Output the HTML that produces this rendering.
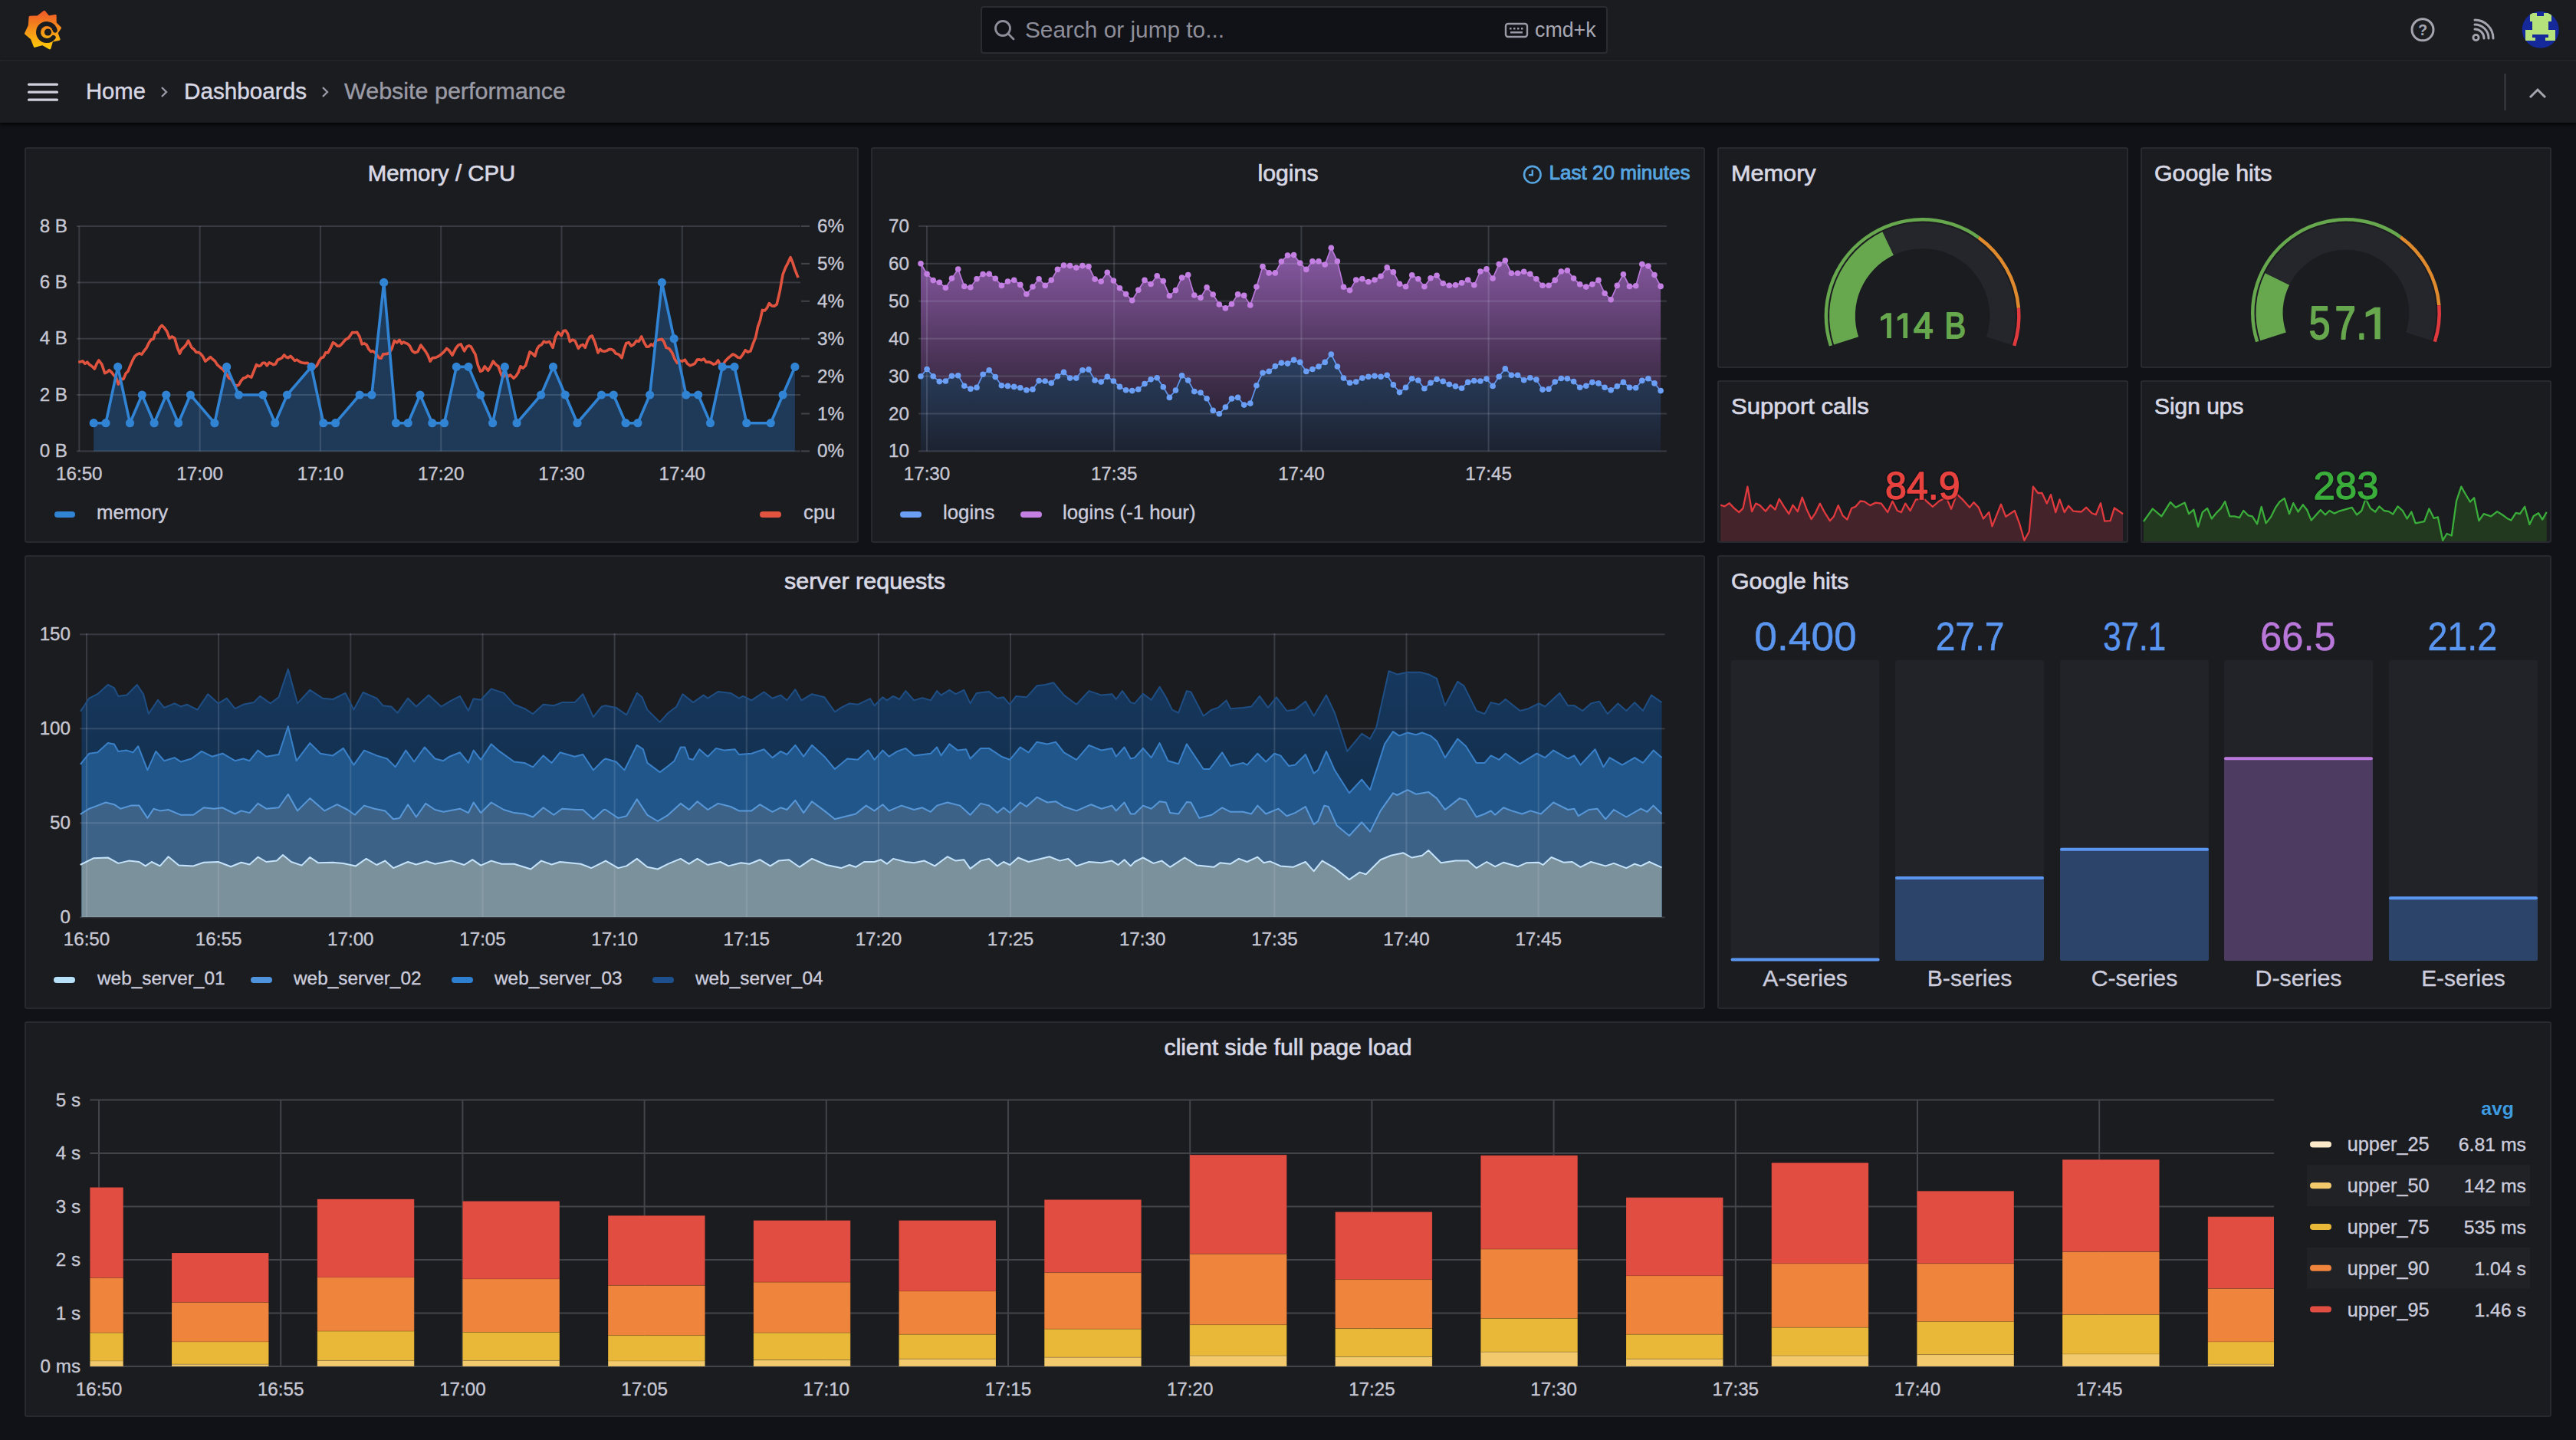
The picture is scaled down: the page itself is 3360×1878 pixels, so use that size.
<!DOCTYPE html><html><head><meta charset="utf-8"><title>Website performance</title><style>
html,body{margin:0;padding:0;background:#111217;}
body{width:3360px;height:1878px;position:relative;overflow:hidden;font-family:"Liberation Sans",sans-serif;color:#ccccdc;}
.a{position:absolute;}
.panel{position:absolute;background:#1a1c20;border:2px solid #27292e;border-radius:3px;box-sizing:border-box;}
svg{position:absolute;left:0;top:0;}
text{font-family:"Liberation Sans",sans-serif;}
</style></head><body>
<div class="a" style="left:0;top:0;width:3360px;height:78px;background:#1a1c20;border-bottom:2px solid #26282c;"></div>
<div class="a" style="left:0;top:80px;width:3360px;height:80px;background:#1a1c20;box-shadow:0 2px 5px rgba(0,0,0,0.95);"></div>
<div class="a" style="left:1279px;top:8px;width:818px;height:62px;background:#111217;border:2px solid #2a2c31;border-radius:4px;box-sizing:border-box;"></div>
<div class="panel" style="left:32px;top:192px;width:1088px;height:516px;"></div>
<div class="panel" style="left:1136px;top:192px;width:1088px;height:516px;"></div>
<div class="panel" style="left:2240px;top:192px;width:536px;height:288px;"></div>
<div class="panel" style="left:2792px;top:192px;width:536px;height:288px;"></div>
<div class="panel" style="left:2240px;top:496px;width:536px;height:212px;"></div>
<div class="panel" style="left:2792px;top:496px;width:536px;height:212px;"></div>
<div class="panel" style="left:32px;top:724px;width:2192px;height:592px;"></div>
<div class="panel" style="left:2240px;top:724px;width:1088px;height:592px;"></div>
<div class="panel" style="left:32px;top:1332px;width:3296px;height:516px;"></div>
<svg width="3360" height="1878" viewBox="0 0 3360 1878"><defs><linearGradient id="lg" x1="0" y1="0" x2="0" y2="1"><stop offset="0" stop-color="#f05a28"/><stop offset="1" stop-color="#fbca0a"/></linearGradient></defs><path d="M57.8,15.3 L63.2,22.0 L72.2,20.4 L72.2,30.1 L78.5,36.4 L74.1,43.0 L77.1,51.2 L67.8,53.2 L64.9,62.9 L55.3,57.5 L45.3,60.4 L41.4,50.4 L33.5,43.6 L38.3,33.5 L39.1,22.2 L49.5,21.7Z" fill="url(#lg)" stroke="url(#lg)" stroke-width="3" stroke-linejoin="round"/><path d="M71.8,39.7 A11 11 0 1 0 69.7,48.8" fill="none" stroke="#1a1c20" stroke-width="6" stroke-linecap="round"/><circle cx="62.5" cy="42" r="4.6" fill="#1a1c20"/><rect x="36" y="108.5" width="40" height="3.2" rx="1.5" fill="#d0d0dc"/><rect x="36" y="118.5" width="40" height="3.2" rx="1.5" fill="#d0d0dc"/><rect x="36" y="128.5" width="40" height="3.2" rx="1.5" fill="#d0d0dc"/><text x="112" y="129.4" font-size="29.5" fill="#d8d8e4" text-anchor="start" font-weight="normal"  textLength="78" lengthAdjust="spacingAndGlyphs" stroke="#d8d8e4" stroke-width="0.4" stroke-linejoin="round">Home</text><path d="M211,114 L217,120 L211,126" fill="none" stroke="#9a9aa6" stroke-width="2.4"/><text x="240" y="129.4" font-size="29.5" fill="#d8d8e4" text-anchor="start" font-weight="normal"  textLength="160" lengthAdjust="spacingAndGlyphs" stroke="#d8d8e4" stroke-width="0.4" stroke-linejoin="round">Dashboards</text><path d="M421,114 L427,120 L421,126" fill="none" stroke="#9a9aa6" stroke-width="2.4"/><text x="449" y="129.4" font-size="30.3" fill="#9b9ba6" text-anchor="start" font-weight="normal"  textLength="289" lengthAdjust="spacingAndGlyphs" stroke="#9b9ba6" stroke-width="0.4" stroke-linejoin="round">Website performance</text><circle cx="1308" cy="37" r="9.5" fill="none" stroke="#8e8e9a" stroke-width="2.8"/><path d="M1315,44 L1322,51" stroke="#8e8e9a" stroke-width="2.8" stroke-linecap="round"/><text x="1337" y="49" font-size="29.8" fill="#8e8e9a" text-anchor="start" font-weight="normal" >Search or jump to...</text><rect x="1964" y="31" width="28" height="17" rx="3" fill="none" stroke="#9a9aa6" stroke-width="2.4"/><rect x="1969" y="36" width="2.5" height="2.5" fill="#9a9aa6"/><rect x="1974" y="36" width="2.5" height="2.5" fill="#9a9aa6"/><rect x="1979" y="36" width="2.5" height="2.5" fill="#9a9aa6"/><rect x="1984" y="36" width="2.5" height="2.5" fill="#9a9aa6"/><rect x="1970" y="41" width="16" height="2.5" fill="#9a9aa6"/><text x="2002" y="48" font-size="26.8" fill="#a8a8b4" text-anchor="start" font-weight="normal" >cmd+k</text><circle cx="3160" cy="38.8" r="14" fill="none" stroke="#a5a5b0" stroke-width="3"/><text x="3160" y="46" font-size="20" fill="#a5a5b0" text-anchor="middle" font-weight="bold" >?</text><circle cx="3229.5" cy="49" r="3.6" fill="none" stroke="#a5a5b0" stroke-width="2.8"/><path d="M3228,38 A12 12 0 0 1 3240,50" fill="none" stroke="#a5a5b0" stroke-width="3" stroke-linecap="round"/><path d="M3228,32 A18 18 0 0 1 3246,50" fill="none" stroke="#a5a5b0" stroke-width="3" stroke-linecap="round"/><path d="M3228,26 A24 24 0 0 1 3252,50" fill="none" stroke="#a5a5b0" stroke-width="3" stroke-linecap="round"/><clipPath id="avc"><circle cx="3313.7" cy="38.8" r="24"/></clipPath><g clip-path="url(#avc)"><rect x="3289" y="14" width="50" height="50" fill="#15299a"/><path d="M3300,17 H3309 V21 H3318 V17 H3328 V28 H3324 V39 H3333 V53 H3320 V49 H3324 V45 H3303 V49 H3307 V53 H3294 V39 H3303 V28 H3300 Z" fill="#b6e27c"/></g><rect x="3266.5" y="96" width="2" height="48" fill="#3a3c42"/><path d="M3300,127 L3310,117 L3320,127" fill="none" stroke="#a5a5b0" stroke-width="3"/><text x="576" y="235.8" font-size="29.2" fill="#d8d8e4" text-anchor="middle" font-weight="normal"  textLength="192.5" lengthAdjust="spacingAndGlyphs" stroke="#d8d8e4" stroke-width="0.7" stroke-linejoin="round">Memory / CPU</text><text x="1680" y="235.8" font-size="29.8" fill="#d8d8e4" text-anchor="middle" font-weight="normal"  textLength="79" lengthAdjust="spacingAndGlyphs" stroke="#d8d8e4" stroke-width="0.7" stroke-linejoin="round">logins</text><text x="2258" y="235.8" font-size="30.2" fill="#d8d8e4" text-anchor="start" font-weight="normal"  textLength="110.7" lengthAdjust="spacingAndGlyphs" stroke="#d8d8e4" stroke-width="0.7" stroke-linejoin="round">Memory</text><text x="2810" y="235.8" font-size="30" fill="#d8d8e4" text-anchor="start" font-weight="normal"  textLength="153.4" lengthAdjust="spacingAndGlyphs" stroke="#d8d8e4" stroke-width="0.7" stroke-linejoin="round">Google hits</text><text x="2258" y="539.5" font-size="30.4" fill="#d8d8e4" text-anchor="start" font-weight="normal"  textLength="179.7" lengthAdjust="spacingAndGlyphs" stroke="#d8d8e4" stroke-width="0.7" stroke-linejoin="round">Support calls</text><text x="2810" y="539.5" font-size="29.8" fill="#d8d8e4" text-anchor="start" font-weight="normal"  textLength="116.4" lengthAdjust="spacingAndGlyphs" stroke="#d8d8e4" stroke-width="0.7" stroke-linejoin="round">Sign ups</text><text x="1128" y="767.8" font-size="30.2" fill="#d8d8e4" text-anchor="middle" font-weight="normal"  textLength="210" lengthAdjust="spacingAndGlyphs" stroke="#d8d8e4" stroke-width="0.7" stroke-linejoin="round">server requests</text><text x="2258" y="767.8" font-size="30" fill="#d8d8e4" text-anchor="start" font-weight="normal"  textLength="153.4" lengthAdjust="spacingAndGlyphs" stroke="#d8d8e4" stroke-width="0.7" stroke-linejoin="round">Google hits</text><text x="1680" y="1375.8" font-size="30" fill="#d8d8e4" text-anchor="middle" font-weight="normal"  textLength="323" lengthAdjust="spacingAndGlyphs" stroke="#d8d8e4" stroke-width="0.7" stroke-linejoin="round">client side full page load</text><circle cx="1998.8" cy="227.7" r="10.8" fill="none" stroke="#57a5e0" stroke-width="2.6"/><path d="M1998.8,221.5 V228.2 H1994" fill="none" stroke="#57a5e0" stroke-width="2.4"/><text x="2020.5" y="233.8" font-size="26" fill="#57a5e0" text-anchor="start" font-weight="normal"  textLength="184" lengthAdjust="spacingAndGlyphs" stroke="#57a5e0" stroke-width="0.9" stroke-linejoin="round">Last 20 minutes</text><clipPath id="c_mem"><rect x="100" y="285" width="944" height="303.4"/></clipPath><path d="M122.2,551.7 L138,551.7 L153.7,478.4 L169.5,551.7 L185.3,515 L201.1,551.7 L216.8,515 L232.6,551.7 L248.4,515 L279.9,551.7 L295.7,478.4 L311.4,515 L343,515 L358.8,551.7 L374.5,515 L406.1,478.4 L421.8,551.7 L437.6,551.7 L469.1,515 L484.9,515 L500.7,368.4 L516.5,551.7 L532.2,551.7 L548,515 L563.8,551.7 L579.5,551.7 L595.3,478.4 L611.1,478.4 L626.8,515 L642.6,551.7 L658.4,478.4 L674.1,551.7 L705.7,515 L721.5,478.4 L737.2,515 L753,551.7 L784.5,515 L800.3,515 L816.1,551.7 L831.9,551.7 L847.6,515 L863.4,368.4 L879.2,441.7 L894.9,515 L910.7,515 L926.5,551.7 L942.2,478.4 L958,478.4 L973.8,551.7 L1005.3,551.7 L1021.1,515 L1036.9,478.4 L1036.9,588.4 L122.2,588.4 Z" fill="#1f3a58"/><rect x="100" y="587.4" width="944" height="2" fill="rgba(210,215,235,0.16)"/><text x="88" y="595.9" font-size="24.2" fill="#c8c8d4" text-anchor="end" font-weight="normal"  stroke="#c8c8d4" stroke-width="0.35" stroke-linejoin="round">0 B</text><rect x="100" y="514" width="944" height="2" fill="rgba(210,215,235,0.16)"/><text x="88" y="522.5" font-size="24.2" fill="#c8c8d4" text-anchor="end" font-weight="normal"  stroke="#c8c8d4" stroke-width="0.35" stroke-linejoin="round">2 B</text><rect x="100" y="440.7" width="944" height="2" fill="rgba(210,215,235,0.16)"/><text x="88" y="449.2" font-size="24.2" fill="#c8c8d4" text-anchor="end" font-weight="normal"  stroke="#c8c8d4" stroke-width="0.35" stroke-linejoin="round">4 B</text><rect x="100" y="367.4" width="944" height="2" fill="rgba(210,215,235,0.16)"/><text x="88" y="375.9" font-size="24.2" fill="#c8c8d4" text-anchor="end" font-weight="normal"  stroke="#c8c8d4" stroke-width="0.35" stroke-linejoin="round">6 B</text><rect x="100" y="294" width="944" height="2" fill="rgba(210,215,235,0.16)"/><text x="88" y="302.5" font-size="24.2" fill="#c8c8d4" text-anchor="end" font-weight="normal"  stroke="#c8c8d4" stroke-width="0.35" stroke-linejoin="round">8 B</text><rect x="102.3" y="295" width="2" height="293.4" fill="rgba(210,215,235,0.16)"/><text x="103.3" y="626" font-size="24.2" fill="#c8c8d4" text-anchor="middle" font-weight="normal"  stroke="#c8c8d4" stroke-width="0.35" stroke-linejoin="round">16:50</text><rect x="259.6" y="295" width="2" height="293.4" fill="rgba(210,215,235,0.16)"/><text x="260.6" y="626" font-size="24.2" fill="#c8c8d4" text-anchor="middle" font-weight="normal"  stroke="#c8c8d4" stroke-width="0.35" stroke-linejoin="round">17:00</text><rect x="416.9" y="295" width="2" height="293.4" fill="rgba(210,215,235,0.16)"/><text x="417.9" y="626" font-size="24.2" fill="#c8c8d4" text-anchor="middle" font-weight="normal"  stroke="#c8c8d4" stroke-width="0.35" stroke-linejoin="round">17:10</text><rect x="574.2" y="295" width="2" height="293.4" fill="rgba(210,215,235,0.16)"/><text x="575.2" y="626" font-size="24.2" fill="#c8c8d4" text-anchor="middle" font-weight="normal"  stroke="#c8c8d4" stroke-width="0.35" stroke-linejoin="round">17:20</text><rect x="731.5" y="295" width="2" height="293.4" fill="rgba(210,215,235,0.16)"/><text x="732.5" y="626" font-size="24.2" fill="#c8c8d4" text-anchor="middle" font-weight="normal"  stroke="#c8c8d4" stroke-width="0.35" stroke-linejoin="round">17:30</text><rect x="888.8" y="295" width="2" height="293.4" fill="rgba(210,215,235,0.16)"/><text x="889.8" y="626" font-size="24.2" fill="#c8c8d4" text-anchor="middle" font-weight="normal"  stroke="#c8c8d4" stroke-width="0.35" stroke-linejoin="round">17:40</text><rect x="1045" y="587.4" width="11" height="2" fill="#424449"/><text x="1066" y="596.4" font-size="24.2" fill="#c8c8d4" text-anchor="start" font-weight="normal"  stroke="#c8c8d4" stroke-width="0.35" stroke-linejoin="round">0%</text><rect x="1045" y="538.5" width="11" height="2" fill="#424449"/><text x="1066" y="547.5" font-size="24.2" fill="#c8c8d4" text-anchor="start" font-weight="normal"  stroke="#c8c8d4" stroke-width="0.35" stroke-linejoin="round">1%</text><rect x="1045" y="489.6" width="11" height="2" fill="#424449"/><text x="1066" y="498.6" font-size="24.2" fill="#c8c8d4" text-anchor="start" font-weight="normal"  stroke="#c8c8d4" stroke-width="0.35" stroke-linejoin="round">2%</text><rect x="1045" y="440.7" width="11" height="2" fill="#424449"/><text x="1066" y="449.7" font-size="24.2" fill="#c8c8d4" text-anchor="start" font-weight="normal"  stroke="#c8c8d4" stroke-width="0.35" stroke-linejoin="round">3%</text><rect x="1045" y="391.8" width="11" height="2" fill="#424449"/><text x="1066" y="400.8" font-size="24.2" fill="#c8c8d4" text-anchor="start" font-weight="normal"  stroke="#c8c8d4" stroke-width="0.35" stroke-linejoin="round">4%</text><rect x="1045" y="342.9" width="11" height="2" fill="#424449"/><text x="1066" y="351.9" font-size="24.2" fill="#c8c8d4" text-anchor="start" font-weight="normal"  stroke="#c8c8d4" stroke-width="0.35" stroke-linejoin="round">5%</text><rect x="1045" y="294" width="11" height="2" fill="#424449"/><text x="1066" y="303" font-size="24.2" fill="#c8c8d4" text-anchor="start" font-weight="normal"  stroke="#c8c8d4" stroke-width="0.35" stroke-linejoin="round">6%</text><path d="M102.2,472.2 L105.1,471.8 L108,471 L110.9,474.4 L113.8,472.2 L116.7,475.6 L120,477.8 L123.3,481.1 L126.1,474.5 L128.9,470 L132.8,475.2 L136.7,486.7 L139.6,485.4 L142.6,482.7 L145.6,485.6 L148.5,489.3 L151.5,492.8 L154.4,501.1 L157.8,494.2 L161.1,494.4 L164.1,487 L167,484.2 L170,476.7 L173,469.9 L175.9,464.7 L178.9,462.2 L181.9,460.9 L184.8,462.2 L187.8,457.8 L191.1,453.6 L194.4,446.7 L197.2,442.7 L200,442.2 L202.8,433.5 L205.6,433.5 L208.3,427.3 L211.1,424.4 L214.4,427.5 L217.8,432.4 L221.1,441.1 L224.4,438.9 L227.8,441.1 L231.1,452.5 L234.4,461.1 L237.2,455.3 L240,452.8 L242.8,449.5 L245.6,444.4 L250,453.3 L253,455.7 L255.9,459.4 L258.9,459.5 L261.9,461.5 L264.8,465.2 L267.8,471.1 L271.1,468.6 L274.4,465.6 L277.4,468.5 L280.4,470.9 L283.3,475.6 L287.2,479 L291.1,482.2 L295,487.5 L298.9,493.3 L302.2,495.3 L305.6,501.5 L308.9,503.3 L311.7,501.7 L314.4,496.7 L317.4,493.3 L320.4,492.4 L323.3,490 L327.8,492.2 L331.1,484.1 L334.4,475.6 L337.2,477.5 L340,476.7 L342.8,473.2 L345.6,473.3 L348.3,476.8 L351.1,472.9 L353.9,474 L356.7,475.6 L359.4,474.7 L362.2,469.3 L365,468.3 L367.8,466.7 L370.6,463 L373.3,465.7 L376.1,466.7 L378.9,464.4 L381.7,467.1 L384.4,470.5 L387.2,469.1 L390,471.1 L392.8,472.8 L395.6,473.2 L398.3,473.6 L401.1,473.3 L404.4,476.6 L407.8,480 L410.6,478.8 L413.3,476.8 L416.1,470.9 L418.9,466.7 L421.9,465.8 L424.8,459.8 L427.8,460 L431.1,453.9 L434.4,446.7 L437.2,448.3 L440,451.3 L442.8,451.4 L445.6,448.9 L448.3,445.7 L451.1,442.5 L453.9,441.4 L456.7,437.8 L459.6,433.5 L462.6,433.7 L465.6,433.3 L468.9,438.7 L472.2,448.9 L475.2,447.9 L478.1,449.6 L481.1,455.6 L483.8,458.4 L486.4,457.8 L489.1,459.9 L491.8,463.1 L494.4,466.7 L497.1,467.3 L499.8,461.9 L502.4,461.7 L505.1,461.4 L507.8,460 L511.1,454.7 L514.4,444.4 L517.8,446.7 L521.1,443.3 L523.8,448.1 L526.4,446 L529.1,447.3 L531.8,448.4 L534.4,451.1 L537.8,457.7 L541.1,460 L545,458.6 L548.9,450 L551.9,454.1 L555,458.1 L558.1,463.4 L561.1,471.1 L564.1,466.8 L567,466.6 L570,465.6 L573.3,463.7 L576.7,461.1 L579.6,458.2 L582.6,454.5 L585.6,456.7 L590,463.3 L594.4,454.4 L597.8,450.1 L601.1,448.9 L605.6,457.8 L608.9,452.2 L611.7,450.9 L614.4,452.2 L617.2,457.3 L620,462.2 L623.3,476.2 L626.7,484.4 L629.4,483.2 L632.2,477.8 L636.7,483.3 L640,477.9 L643.3,471.1 L646.7,475.4 L650,477.8 L654.4,490 L657.2,491.1 L660,487 L662.8,491 L665.6,488.9 L670,493.3 L673,490.5 L675.9,486.1 L678.9,477.8 L682.2,480.1 L685.6,476.7 L688.3,467.9 L691.1,458.9 L694.4,461.1 L697.8,464.4 L700.6,455.1 L703.3,451.1 L706.3,449.7 L709.3,445.4 L712.2,446.7 L716.7,445.6 L721.1,453.3 L724.4,439.7 L727.8,433.3 L732.2,437.8 L735,431.5 L737.8,431.1 L740.6,435.3 L743.3,445.6 L746.7,443.1 L750,444.4 L754.4,454.4 L757.4,450.6 L760.4,449.5 L763.3,453.3 L766.3,444.6 L769.3,439.4 L772.2,437.8 L776.1,446.9 L780,460 L782.8,455.3 L785.6,457.8 L788.5,458.3 L791.5,457.4 L794.4,455.6 L797.4,455.5 L800.4,457.1 L803.3,461.1 L807.2,462.3 L811.1,466.7 L813.9,455.9 L816.7,447.8 L820,446.6 L823.3,451.1 L826.7,449.2 L830,444.4 L833.3,445.2 L836.7,438.9 L840,446.4 L843.3,452.2 L846.3,452 L849.3,448.9 L852.2,451.1 L855.6,443.9 L858.9,443.3 L863.3,442.2 L866.1,445.8 L868.9,453.3 L872.8,454.6 L876.7,460 L880,468.1 L883.3,473.3 L886.7,470.5 L890,471.1 L893.3,469.2 L896.7,474.4 L900,476.8 L903.3,475.6 L906.3,474.1 L909.3,469.1 L912.2,468.9 L915.2,469.7 L918.1,468 L921.1,472.2 L924.4,472 L927.8,473.3 L930.7,475.1 L933.7,474.3 L936.7,470 L939.4,475.5 L942.2,476.7 L946.1,470.8 L950,466.7 L953,464.4 L955.9,462 L958.9,463.3 L962.2,466 L965.6,466.7 L968.9,462.2 L972.2,456.7 L975.6,459.2 L978.9,457.8 L982.2,448.4 L985.6,440 L988.5,426.2 L991.5,417.7 L994.4,404.4 L997.4,405 L1000.4,401.8 L1003.3,395.6 L1006.7,398.9 L1010,399.2 L1013.3,396.7 L1017.2,379.6 L1021.1,357.8 L1024.4,349.3 L1027.8,342.8 L1031.1,335.6 L1033.9,342.4 L1036.7,351.1 L1041.1,362.2" fill="none" stroke="#e0533f" stroke-width="3.6" stroke-linejoin="round"/><path d="M122.2,551.7 L138,551.7 L153.7,478.4 L169.5,551.7 L185.3,515 L201.1,551.7 L216.8,515 L232.6,551.7 L248.4,515 L279.9,551.7 L295.7,478.4 L311.4,515 L343,515 L358.8,551.7 L374.5,515 L406.1,478.4 L421.8,551.7 L437.6,551.7 L469.1,515 L484.9,515 L500.7,368.4 L516.5,551.7 L532.2,551.7 L548,515 L563.8,551.7 L579.5,551.7 L595.3,478.4 L611.1,478.4 L626.8,515 L642.6,551.7 L658.4,478.4 L674.1,551.7 L705.7,515 L721.5,478.4 L737.2,515 L753,551.7 L784.5,515 L800.3,515 L816.1,551.7 L831.9,551.7 L847.6,515 L863.4,368.4 L879.2,441.7 L894.9,515 L910.7,515 L926.5,551.7 L942.2,478.4 L958,478.4 L973.8,551.7 L1005.3,551.7 L1021.1,515 L1036.9,478.4" fill="none" stroke="#3183d4" stroke-width="3.6" stroke-linejoin="round"/><circle cx="122.2" cy="551.7" r="5.6" fill="#3183d4"/><circle cx="138" cy="551.7" r="5.6" fill="#3183d4"/><circle cx="153.7" cy="478.4" r="5.6" fill="#3183d4"/><circle cx="169.5" cy="551.7" r="5.6" fill="#3183d4"/><circle cx="185.3" cy="515" r="5.6" fill="#3183d4"/><circle cx="201.1" cy="551.7" r="5.6" fill="#3183d4"/><circle cx="216.8" cy="515" r="5.6" fill="#3183d4"/><circle cx="232.6" cy="551.7" r="5.6" fill="#3183d4"/><circle cx="248.4" cy="515" r="5.6" fill="#3183d4"/><circle cx="279.9" cy="551.7" r="5.6" fill="#3183d4"/><circle cx="295.7" cy="478.4" r="5.6" fill="#3183d4"/><circle cx="311.4" cy="515" r="5.6" fill="#3183d4"/><circle cx="343" cy="515" r="5.6" fill="#3183d4"/><circle cx="358.8" cy="551.7" r="5.6" fill="#3183d4"/><circle cx="374.5" cy="515" r="5.6" fill="#3183d4"/><circle cx="406.1" cy="478.4" r="5.6" fill="#3183d4"/><circle cx="421.8" cy="551.7" r="5.6" fill="#3183d4"/><circle cx="437.6" cy="551.7" r="5.6" fill="#3183d4"/><circle cx="469.1" cy="515" r="5.6" fill="#3183d4"/><circle cx="484.9" cy="515" r="5.6" fill="#3183d4"/><circle cx="500.7" cy="368.4" r="5.6" fill="#3183d4"/><circle cx="516.5" cy="551.7" r="5.6" fill="#3183d4"/><circle cx="532.2" cy="551.7" r="5.6" fill="#3183d4"/><circle cx="548" cy="515" r="5.6" fill="#3183d4"/><circle cx="563.8" cy="551.7" r="5.6" fill="#3183d4"/><circle cx="579.5" cy="551.7" r="5.6" fill="#3183d4"/><circle cx="595.3" cy="478.4" r="5.6" fill="#3183d4"/><circle cx="611.1" cy="478.4" r="5.6" fill="#3183d4"/><circle cx="626.8" cy="515" r="5.6" fill="#3183d4"/><circle cx="642.6" cy="551.7" r="5.6" fill="#3183d4"/><circle cx="658.4" cy="478.4" r="5.6" fill="#3183d4"/><circle cx="674.1" cy="551.7" r="5.6" fill="#3183d4"/><circle cx="705.7" cy="515" r="5.6" fill="#3183d4"/><circle cx="721.5" cy="478.4" r="5.6" fill="#3183d4"/><circle cx="737.2" cy="515" r="5.6" fill="#3183d4"/><circle cx="753" cy="551.7" r="5.6" fill="#3183d4"/><circle cx="784.5" cy="515" r="5.6" fill="#3183d4"/><circle cx="800.3" cy="515" r="5.6" fill="#3183d4"/><circle cx="816.1" cy="551.7" r="5.6" fill="#3183d4"/><circle cx="831.9" cy="551.7" r="5.6" fill="#3183d4"/><circle cx="847.6" cy="515" r="5.6" fill="#3183d4"/><circle cx="863.4" cy="368.4" r="5.6" fill="#3183d4"/><circle cx="879.2" cy="441.7" r="5.6" fill="#3183d4"/><circle cx="894.9" cy="515" r="5.6" fill="#3183d4"/><circle cx="910.7" cy="515" r="5.6" fill="#3183d4"/><circle cx="926.5" cy="551.7" r="5.6" fill="#3183d4"/><circle cx="942.2" cy="478.4" r="5.6" fill="#3183d4"/><circle cx="958" cy="478.4" r="5.6" fill="#3183d4"/><circle cx="973.8" cy="551.7" r="5.6" fill="#3183d4"/><circle cx="1005.3" cy="551.7" r="5.6" fill="#3183d4"/><circle cx="1021.1" cy="515" r="5.6" fill="#3183d4"/><circle cx="1036.9" cy="478.4" r="5.6" fill="#3183d4"/><rect x="71" y="667" width="27" height="8" rx="4" fill="#3183d4"/><text x="126" y="677" font-size="25.8" fill="#ccccdc" text-anchor="start" font-weight="normal"  stroke="#ccccdc" stroke-width="0.35" stroke-linejoin="round">memory</text><rect x="991" y="667" width="28" height="8" rx="4" fill="#e0533f"/><text x="1048" y="677" font-size="25.8" fill="#ccccdc" text-anchor="start" font-weight="normal"  stroke="#ccccdc" stroke-width="0.35" stroke-linejoin="round">cpu</text><defs><linearGradient id="gp" x1="0" y1="0" x2="0" y2="1"><stop offset="0" stop-color="#8a5aa6"/><stop offset="0.55" stop-color="#4a3356"/><stop offset="1" stop-color="#1c1b22"/></linearGradient><linearGradient id="gb" x1="0" y1="0" x2="0" y2="1"><stop offset="0" stop-color="#2e4a72"/><stop offset="1" stop-color="#1b2130"/></linearGradient></defs><path d="M1201,343.7 L1209.1,357.3 L1217.2,365.6 L1225.3,368.3 L1233.4,375.3 L1241.5,363.1 L1249.7,351 L1257.8,373.4 L1265.9,374.7 L1274,363.7 L1282.1,357.6 L1290.2,357.3 L1298.3,363.3 L1306.4,372.4 L1314.5,367 L1322.7,365.2 L1330.8,371.4 L1338.9,383.5 L1347,374 L1355.1,363.7 L1363.2,372.4 L1371.3,365.2 L1379.4,351.4 L1387.5,346 L1395.6,346.6 L1403.8,349.1 L1411.9,346.6 L1420,347.6 L1428.1,364.1 L1436.2,367 L1444.3,355.3 L1452.4,366 L1460.5,375.7 L1468.6,383.5 L1476.7,391.8 L1484.8,378.2 L1493,365.4 L1501.1,370.5 L1509.2,359.8 L1517.3,366.6 L1525.4,385.8 L1533.5,378.6 L1541.6,362.1 L1549.7,358.6 L1557.8,385 L1566,388.3 L1574.1,374.7 L1582.2,384 L1590.3,397 L1598.4,401.9 L1606.5,396.5 L1614.6,383.9 L1622.7,385.4 L1630.8,398 L1638.9,374.1 L1647,347.6 L1655.2,355.9 L1663.3,355.9 L1671.4,341.1 L1679.5,333 L1687.6,332.6 L1695.7,343.1 L1703.8,351.4 L1711.9,340.8 L1720,340.8 L1728.2,345 L1736.3,323.3 L1744.4,340.8 L1752.5,374.3 L1760.6,378.6 L1768.7,365 L1776.8,363.7 L1784.9,367.5 L1793,365 L1801.1,360.2 L1809.2,348.9 L1817.4,354.9 L1825.5,370.3 L1833.6,373.8 L1841.7,358.8 L1849.8,363.7 L1857.9,373.8 L1866,362.7 L1874.1,359.2 L1882.2,369.5 L1890.3,372.2 L1898.5,371.8 L1906.6,368.9 L1914.7,365 L1922.8,371.8 L1930.9,354 L1939,350.9 L1947.1,363.1 L1955.2,344.6 L1963.3,339.8 L1971.4,356.3 L1979.6,356.3 L1987.7,354.3 L1995.8,357.3 L2003.9,363.7 L2012,372.2 L2020.1,372.2 L2028.2,365.4 L2036.3,354 L2044.4,352.8 L2052.6,363.1 L2060.7,370.8 L2068.8,374.1 L2076.9,370.8 L2085,365.4 L2093.1,382.5 L2101.2,390.8 L2109.3,372.4 L2117.4,357.8 L2125.5,373.4 L2133.7,372.8 L2141.8,344.6 L2149.9,347 L2158,358.6 L2166.1,373.4 L2166.1,588.4 L1201,588.4 Z" fill="url(#gp)"/><defs><linearGradient id="gb2" gradientUnits="userSpaceOnUse" x1="0" y1="450" x2="0" y2="588"><stop offset="0" stop-color="#2c4468"/><stop offset="1" stop-color="#1c2230"/></linearGradient></defs><path d="M1201,490.8 L1209.1,481.5 L1217.2,490.8 L1225.3,497.6 L1233.4,497 L1241.5,490.2 L1249.7,489.8 L1257.8,503.2 L1265.9,507.1 L1274,505.4 L1282.1,488.3 L1290.2,482.8 L1298.3,491.6 L1306.4,502.8 L1314.5,503.4 L1322.7,504.4 L1330.8,505.7 L1338.9,508.7 L1347,507.7 L1355.1,496.6 L1363.2,497 L1371.3,499.5 L1379.4,490.8 L1387.5,485.4 L1395.6,493.1 L1403.8,493.1 L1411.9,482.8 L1420,481.9 L1428.1,496 L1436.2,498 L1444.3,491.2 L1452.4,497 L1460.5,504.4 L1468.6,508.7 L1476.7,509.6 L1484.8,507.7 L1493,500.5 L1501.1,494.7 L1509.2,492.7 L1517.3,504.8 L1525.4,518.4 L1533.5,509 L1541.6,489.8 L1549.7,496 L1557.8,510.6 L1566,512 L1574.1,519.7 L1582.2,535.4 L1590.3,539.7 L1598.4,531 L1606.5,519.9 L1614.6,518.4 L1622.7,528.1 L1630.8,526.1 L1638.9,502.8 L1647,486.3 L1655.2,484.4 L1663.3,477.6 L1671.4,473.3 L1679.5,474.1 L1687.6,469.4 L1695.7,472.4 L1703.8,484.4 L1711.9,481.5 L1720,478 L1728.2,472.4 L1736.3,462.1 L1744.4,478 L1752.5,493.1 L1760.6,499.3 L1768.7,498 L1776.8,493.1 L1784.9,491.2 L1793,490.2 L1801.1,491.2 L1809.2,489.2 L1817.4,501.9 L1825.5,511.6 L1833.6,505.4 L1841.7,493.7 L1849.8,496 L1857.9,506.7 L1866,499.3 L1874.1,494.5 L1882.2,497.4 L1890.3,501.3 L1898.5,503.8 L1906.6,506.3 L1914.7,498.4 L1922.8,496.6 L1930.9,497 L1939,494.1 L1947.1,503.4 L1955.2,491.2 L1963.3,480.9 L1971.4,489.2 L1979.6,489.2 L1987.7,495.7 L1995.8,492.7 L2003.9,495.1 L2012,508.1 L2020.1,507.3 L2028.2,498 L2036.3,493.5 L2044.4,493.7 L2052.6,497.6 L2060.7,505.2 L2068.8,503.2 L2076.9,498.6 L2085,499.9 L2093.1,505.2 L2101.2,508.7 L2109.3,503.8 L2117.4,498.4 L2125.5,505.4 L2133.7,505.7 L2141.8,496.4 L2149.9,493.7 L2158,499.9 L2166.1,509.6 L2166.1,588.4 L1201,588.4 Z" fill="url(#gb2)"/><rect x="1198" y="587.4" width="976" height="2" fill="rgba(210,215,235,0.16)"/><text x="1186" y="596.4" font-size="24.2" fill="#c8c8d4" text-anchor="end" font-weight="normal"  stroke="#c8c8d4" stroke-width="0.35" stroke-linejoin="round">10</text><rect x="1198" y="538.5" width="976" height="2" fill="rgba(210,215,235,0.16)"/><text x="1186" y="547.5" font-size="24.2" fill="#c8c8d4" text-anchor="end" font-weight="normal"  stroke="#c8c8d4" stroke-width="0.35" stroke-linejoin="round">20</text><rect x="1198" y="489.6" width="976" height="2" fill="rgba(210,215,235,0.16)"/><text x="1186" y="498.6" font-size="24.2" fill="#c8c8d4" text-anchor="end" font-weight="normal"  stroke="#c8c8d4" stroke-width="0.35" stroke-linejoin="round">30</text><rect x="1198" y="440.6" width="976" height="2" fill="rgba(210,215,235,0.16)"/><text x="1186" y="449.6" font-size="24.2" fill="#c8c8d4" text-anchor="end" font-weight="normal"  stroke="#c8c8d4" stroke-width="0.35" stroke-linejoin="round">40</text><rect x="1198" y="391.7" width="976" height="2" fill="rgba(210,215,235,0.16)"/><text x="1186" y="400.7" font-size="24.2" fill="#c8c8d4" text-anchor="end" font-weight="normal"  stroke="#c8c8d4" stroke-width="0.35" stroke-linejoin="round">50</text><rect x="1198" y="342.8" width="976" height="2" fill="rgba(210,215,235,0.16)"/><text x="1186" y="351.8" font-size="24.2" fill="#c8c8d4" text-anchor="end" font-weight="normal"  stroke="#c8c8d4" stroke-width="0.35" stroke-linejoin="round">60</text><rect x="1198" y="293.9" width="976" height="2" fill="rgba(210,215,235,0.16)"/><text x="1186" y="302.9" font-size="24.2" fill="#c8c8d4" text-anchor="end" font-weight="normal"  stroke="#c8c8d4" stroke-width="0.35" stroke-linejoin="round">70</text><rect x="1208" y="294.9" width="2" height="293.5" fill="rgba(210,215,235,0.16)"/><text x="1209" y="626" font-size="24.2" fill="#c8c8d4" text-anchor="middle" font-weight="normal"  stroke="#c8c8d4" stroke-width="0.35" stroke-linejoin="round">17:30</text><rect x="1452.2" y="294.9" width="2" height="293.5" fill="rgba(210,215,235,0.16)"/><text x="1453.2" y="626" font-size="24.2" fill="#c8c8d4" text-anchor="middle" font-weight="normal"  stroke="#c8c8d4" stroke-width="0.35" stroke-linejoin="round">17:35</text><rect x="1696.4" y="294.9" width="2" height="293.5" fill="rgba(210,215,235,0.16)"/><text x="1697.4" y="626" font-size="24.2" fill="#c8c8d4" text-anchor="middle" font-weight="normal"  stroke="#c8c8d4" stroke-width="0.35" stroke-linejoin="round">17:40</text><rect x="1940.6" y="294.9" width="2" height="293.5" fill="rgba(210,215,235,0.16)"/><text x="1941.6" y="626" font-size="24.2" fill="#c8c8d4" text-anchor="middle" font-weight="normal"  stroke="#c8c8d4" stroke-width="0.35" stroke-linejoin="round">17:45</text><path d="M1201,343.7 L1209.1,357.3 L1217.2,365.6 L1225.3,368.3 L1233.4,375.3 L1241.5,363.1 L1249.7,351 L1257.8,373.4 L1265.9,374.7 L1274,363.7 L1282.1,357.6 L1290.2,357.3 L1298.3,363.3 L1306.4,372.4 L1314.5,367 L1322.7,365.2 L1330.8,371.4 L1338.9,383.5 L1347,374 L1355.1,363.7 L1363.2,372.4 L1371.3,365.2 L1379.4,351.4 L1387.5,346 L1395.6,346.6 L1403.8,349.1 L1411.9,346.6 L1420,347.6 L1428.1,364.1 L1436.2,367 L1444.3,355.3 L1452.4,366 L1460.5,375.7 L1468.6,383.5 L1476.7,391.8 L1484.8,378.2 L1493,365.4 L1501.1,370.5 L1509.2,359.8 L1517.3,366.6 L1525.4,385.8 L1533.5,378.6 L1541.6,362.1 L1549.7,358.6 L1557.8,385 L1566,388.3 L1574.1,374.7 L1582.2,384 L1590.3,397 L1598.4,401.9 L1606.5,396.5 L1614.6,383.9 L1622.7,385.4 L1630.8,398 L1638.9,374.1 L1647,347.6 L1655.2,355.9 L1663.3,355.9 L1671.4,341.1 L1679.5,333 L1687.6,332.6 L1695.7,343.1 L1703.8,351.4 L1711.9,340.8 L1720,340.8 L1728.2,345 L1736.3,323.3 L1744.4,340.8 L1752.5,374.3 L1760.6,378.6 L1768.7,365 L1776.8,363.7 L1784.9,367.5 L1793,365 L1801.1,360.2 L1809.2,348.9 L1817.4,354.9 L1825.5,370.3 L1833.6,373.8 L1841.7,358.8 L1849.8,363.7 L1857.9,373.8 L1866,362.7 L1874.1,359.2 L1882.2,369.5 L1890.3,372.2 L1898.5,371.8 L1906.6,368.9 L1914.7,365 L1922.8,371.8 L1930.9,354 L1939,350.9 L1947.1,363.1 L1955.2,344.6 L1963.3,339.8 L1971.4,356.3 L1979.6,356.3 L1987.7,354.3 L1995.8,357.3 L2003.9,363.7 L2012,372.2 L2020.1,372.2 L2028.2,365.4 L2036.3,354 L2044.4,352.8 L2052.6,363.1 L2060.7,370.8 L2068.8,374.1 L2076.9,370.8 L2085,365.4 L2093.1,382.5 L2101.2,390.8 L2109.3,372.4 L2117.4,357.8 L2125.5,373.4 L2133.7,372.8 L2141.8,344.6 L2149.9,347 L2158,358.6 L2166.1,373.4" fill="none" stroke="#b877d9" stroke-width="1.7"/><path d="M1201,490.8 L1209.1,481.5 L1217.2,490.8 L1225.3,497.6 L1233.4,497 L1241.5,490.2 L1249.7,489.8 L1257.8,503.2 L1265.9,507.1 L1274,505.4 L1282.1,488.3 L1290.2,482.8 L1298.3,491.6 L1306.4,502.8 L1314.5,503.4 L1322.7,504.4 L1330.8,505.7 L1338.9,508.7 L1347,507.7 L1355.1,496.6 L1363.2,497 L1371.3,499.5 L1379.4,490.8 L1387.5,485.4 L1395.6,493.1 L1403.8,493.1 L1411.9,482.8 L1420,481.9 L1428.1,496 L1436.2,498 L1444.3,491.2 L1452.4,497 L1460.5,504.4 L1468.6,508.7 L1476.7,509.6 L1484.8,507.7 L1493,500.5 L1501.1,494.7 L1509.2,492.7 L1517.3,504.8 L1525.4,518.4 L1533.5,509 L1541.6,489.8 L1549.7,496 L1557.8,510.6 L1566,512 L1574.1,519.7 L1582.2,535.4 L1590.3,539.7 L1598.4,531 L1606.5,519.9 L1614.6,518.4 L1622.7,528.1 L1630.8,526.1 L1638.9,502.8 L1647,486.3 L1655.2,484.4 L1663.3,477.6 L1671.4,473.3 L1679.5,474.1 L1687.6,469.4 L1695.7,472.4 L1703.8,484.4 L1711.9,481.5 L1720,478 L1728.2,472.4 L1736.3,462.1 L1744.4,478 L1752.5,493.1 L1760.6,499.3 L1768.7,498 L1776.8,493.1 L1784.9,491.2 L1793,490.2 L1801.1,491.2 L1809.2,489.2 L1817.4,501.9 L1825.5,511.6 L1833.6,505.4 L1841.7,493.7 L1849.8,496 L1857.9,506.7 L1866,499.3 L1874.1,494.5 L1882.2,497.4 L1890.3,501.3 L1898.5,503.8 L1906.6,506.3 L1914.7,498.4 L1922.8,496.6 L1930.9,497 L1939,494.1 L1947.1,503.4 L1955.2,491.2 L1963.3,480.9 L1971.4,489.2 L1979.6,489.2 L1987.7,495.7 L1995.8,492.7 L2003.9,495.1 L2012,508.1 L2020.1,507.3 L2028.2,498 L2036.3,493.5 L2044.4,493.7 L2052.6,497.6 L2060.7,505.2 L2068.8,503.2 L2076.9,498.6 L2085,499.9 L2093.1,505.2 L2101.2,508.7 L2109.3,503.8 L2117.4,498.4 L2125.5,505.4 L2133.7,505.7 L2141.8,496.4 L2149.9,493.7 L2158,499.9 L2166.1,509.6" fill="none" stroke="#5f95ec" stroke-width="1.7"/><circle cx="1201" cy="343.7" r="3.8" fill="#c47fe2"/><circle cx="1209.1" cy="357.3" r="3.8" fill="#c47fe2"/><circle cx="1217.2" cy="365.6" r="3.8" fill="#c47fe2"/><circle cx="1225.3" cy="368.3" r="3.8" fill="#c47fe2"/><circle cx="1233.4" cy="375.3" r="3.8" fill="#c47fe2"/><circle cx="1241.5" cy="363.1" r="3.8" fill="#c47fe2"/><circle cx="1249.7" cy="351" r="3.8" fill="#c47fe2"/><circle cx="1257.8" cy="373.4" r="3.8" fill="#c47fe2"/><circle cx="1265.9" cy="374.7" r="3.8" fill="#c47fe2"/><circle cx="1274" cy="363.7" r="3.8" fill="#c47fe2"/><circle cx="1282.1" cy="357.6" r="3.8" fill="#c47fe2"/><circle cx="1290.2" cy="357.3" r="3.8" fill="#c47fe2"/><circle cx="1298.3" cy="363.3" r="3.8" fill="#c47fe2"/><circle cx="1306.4" cy="372.4" r="3.8" fill="#c47fe2"/><circle cx="1314.5" cy="367" r="3.8" fill="#c47fe2"/><circle cx="1322.7" cy="365.2" r="3.8" fill="#c47fe2"/><circle cx="1330.8" cy="371.4" r="3.8" fill="#c47fe2"/><circle cx="1338.9" cy="383.5" r="3.8" fill="#c47fe2"/><circle cx="1347" cy="374" r="3.8" fill="#c47fe2"/><circle cx="1355.1" cy="363.7" r="3.8" fill="#c47fe2"/><circle cx="1363.2" cy="372.4" r="3.8" fill="#c47fe2"/><circle cx="1371.3" cy="365.2" r="3.8" fill="#c47fe2"/><circle cx="1379.4" cy="351.4" r="3.8" fill="#c47fe2"/><circle cx="1387.5" cy="346" r="3.8" fill="#c47fe2"/><circle cx="1395.6" cy="346.6" r="3.8" fill="#c47fe2"/><circle cx="1403.8" cy="349.1" r="3.8" fill="#c47fe2"/><circle cx="1411.9" cy="346.6" r="3.8" fill="#c47fe2"/><circle cx="1420" cy="347.6" r="3.8" fill="#c47fe2"/><circle cx="1428.1" cy="364.1" r="3.8" fill="#c47fe2"/><circle cx="1436.2" cy="367" r="3.8" fill="#c47fe2"/><circle cx="1444.3" cy="355.3" r="3.8" fill="#c47fe2"/><circle cx="1452.4" cy="366" r="3.8" fill="#c47fe2"/><circle cx="1460.5" cy="375.7" r="3.8" fill="#c47fe2"/><circle cx="1468.6" cy="383.5" r="3.8" fill="#c47fe2"/><circle cx="1476.7" cy="391.8" r="3.8" fill="#c47fe2"/><circle cx="1484.8" cy="378.2" r="3.8" fill="#c47fe2"/><circle cx="1493" cy="365.4" r="3.8" fill="#c47fe2"/><circle cx="1501.1" cy="370.5" r="3.8" fill="#c47fe2"/><circle cx="1509.2" cy="359.8" r="3.8" fill="#c47fe2"/><circle cx="1517.3" cy="366.6" r="3.8" fill="#c47fe2"/><circle cx="1525.4" cy="385.8" r="3.8" fill="#c47fe2"/><circle cx="1533.5" cy="378.6" r="3.8" fill="#c47fe2"/><circle cx="1541.6" cy="362.1" r="3.8" fill="#c47fe2"/><circle cx="1549.7" cy="358.6" r="3.8" fill="#c47fe2"/><circle cx="1557.8" cy="385" r="3.8" fill="#c47fe2"/><circle cx="1566" cy="388.3" r="3.8" fill="#c47fe2"/><circle cx="1574.1" cy="374.7" r="3.8" fill="#c47fe2"/><circle cx="1582.2" cy="384" r="3.8" fill="#c47fe2"/><circle cx="1590.3" cy="397" r="3.8" fill="#c47fe2"/><circle cx="1598.4" cy="401.9" r="3.8" fill="#c47fe2"/><circle cx="1606.5" cy="396.5" r="3.8" fill="#c47fe2"/><circle cx="1614.6" cy="383.9" r="3.8" fill="#c47fe2"/><circle cx="1622.7" cy="385.4" r="3.8" fill="#c47fe2"/><circle cx="1630.8" cy="398" r="3.8" fill="#c47fe2"/><circle cx="1638.9" cy="374.1" r="3.8" fill="#c47fe2"/><circle cx="1647" cy="347.6" r="3.8" fill="#c47fe2"/><circle cx="1655.2" cy="355.9" r="3.8" fill="#c47fe2"/><circle cx="1663.3" cy="355.9" r="3.8" fill="#c47fe2"/><circle cx="1671.4" cy="341.1" r="3.8" fill="#c47fe2"/><circle cx="1679.5" cy="333" r="3.8" fill="#c47fe2"/><circle cx="1687.6" cy="332.6" r="3.8" fill="#c47fe2"/><circle cx="1695.7" cy="343.1" r="3.8" fill="#c47fe2"/><circle cx="1703.8" cy="351.4" r="3.8" fill="#c47fe2"/><circle cx="1711.9" cy="340.8" r="3.8" fill="#c47fe2"/><circle cx="1720" cy="340.8" r="3.8" fill="#c47fe2"/><circle cx="1728.2" cy="345" r="3.8" fill="#c47fe2"/><circle cx="1736.3" cy="323.3" r="3.8" fill="#c47fe2"/><circle cx="1744.4" cy="340.8" r="3.8" fill="#c47fe2"/><circle cx="1752.5" cy="374.3" r="3.8" fill="#c47fe2"/><circle cx="1760.6" cy="378.6" r="3.8" fill="#c47fe2"/><circle cx="1768.7" cy="365" r="3.8" fill="#c47fe2"/><circle cx="1776.8" cy="363.7" r="3.8" fill="#c47fe2"/><circle cx="1784.9" cy="367.5" r="3.8" fill="#c47fe2"/><circle cx="1793" cy="365" r="3.8" fill="#c47fe2"/><circle cx="1801.1" cy="360.2" r="3.8" fill="#c47fe2"/><circle cx="1809.2" cy="348.9" r="3.8" fill="#c47fe2"/><circle cx="1817.4" cy="354.9" r="3.8" fill="#c47fe2"/><circle cx="1825.5" cy="370.3" r="3.8" fill="#c47fe2"/><circle cx="1833.6" cy="373.8" r="3.8" fill="#c47fe2"/><circle cx="1841.7" cy="358.8" r="3.8" fill="#c47fe2"/><circle cx="1849.8" cy="363.7" r="3.8" fill="#c47fe2"/><circle cx="1857.9" cy="373.8" r="3.8" fill="#c47fe2"/><circle cx="1866" cy="362.7" r="3.8" fill="#c47fe2"/><circle cx="1874.1" cy="359.2" r="3.8" fill="#c47fe2"/><circle cx="1882.2" cy="369.5" r="3.8" fill="#c47fe2"/><circle cx="1890.3" cy="372.2" r="3.8" fill="#c47fe2"/><circle cx="1898.5" cy="371.8" r="3.8" fill="#c47fe2"/><circle cx="1906.6" cy="368.9" r="3.8" fill="#c47fe2"/><circle cx="1914.7" cy="365" r="3.8" fill="#c47fe2"/><circle cx="1922.8" cy="371.8" r="3.8" fill="#c47fe2"/><circle cx="1930.9" cy="354" r="3.8" fill="#c47fe2"/><circle cx="1939" cy="350.9" r="3.8" fill="#c47fe2"/><circle cx="1947.1" cy="363.1" r="3.8" fill="#c47fe2"/><circle cx="1955.2" cy="344.6" r="3.8" fill="#c47fe2"/><circle cx="1963.3" cy="339.8" r="3.8" fill="#c47fe2"/><circle cx="1971.4" cy="356.3" r="3.8" fill="#c47fe2"/><circle cx="1979.6" cy="356.3" r="3.8" fill="#c47fe2"/><circle cx="1987.7" cy="354.3" r="3.8" fill="#c47fe2"/><circle cx="1995.8" cy="357.3" r="3.8" fill="#c47fe2"/><circle cx="2003.9" cy="363.7" r="3.8" fill="#c47fe2"/><circle cx="2012" cy="372.2" r="3.8" fill="#c47fe2"/><circle cx="2020.1" cy="372.2" r="3.8" fill="#c47fe2"/><circle cx="2028.2" cy="365.4" r="3.8" fill="#c47fe2"/><circle cx="2036.3" cy="354" r="3.8" fill="#c47fe2"/><circle cx="2044.4" cy="352.8" r="3.8" fill="#c47fe2"/><circle cx="2052.6" cy="363.1" r="3.8" fill="#c47fe2"/><circle cx="2060.7" cy="370.8" r="3.8" fill="#c47fe2"/><circle cx="2068.8" cy="374.1" r="3.8" fill="#c47fe2"/><circle cx="2076.9" cy="370.8" r="3.8" fill="#c47fe2"/><circle cx="2085" cy="365.4" r="3.8" fill="#c47fe2"/><circle cx="2093.1" cy="382.5" r="3.8" fill="#c47fe2"/><circle cx="2101.2" cy="390.8" r="3.8" fill="#c47fe2"/><circle cx="2109.3" cy="372.4" r="3.8" fill="#c47fe2"/><circle cx="2117.4" cy="357.8" r="3.8" fill="#c47fe2"/><circle cx="2125.5" cy="373.4" r="3.8" fill="#c47fe2"/><circle cx="2133.7" cy="372.8" r="3.8" fill="#c47fe2"/><circle cx="2141.8" cy="344.6" r="3.8" fill="#c47fe2"/><circle cx="2149.9" cy="347" r="3.8" fill="#c47fe2"/><circle cx="2158" cy="358.6" r="3.8" fill="#c47fe2"/><circle cx="2166.1" cy="373.4" r="3.8" fill="#c47fe2"/><circle cx="1201" cy="490.8" r="3.8" fill="#6a9ff5"/><circle cx="1209.1" cy="481.5" r="3.8" fill="#6a9ff5"/><circle cx="1217.2" cy="490.8" r="3.8" fill="#6a9ff5"/><circle cx="1225.3" cy="497.6" r="3.8" fill="#6a9ff5"/><circle cx="1233.4" cy="497" r="3.8" fill="#6a9ff5"/><circle cx="1241.5" cy="490.2" r="3.8" fill="#6a9ff5"/><circle cx="1249.7" cy="489.8" r="3.8" fill="#6a9ff5"/><circle cx="1257.8" cy="503.2" r="3.8" fill="#6a9ff5"/><circle cx="1265.9" cy="507.1" r="3.8" fill="#6a9ff5"/><circle cx="1274" cy="505.4" r="3.8" fill="#6a9ff5"/><circle cx="1282.1" cy="488.3" r="3.8" fill="#6a9ff5"/><circle cx="1290.2" cy="482.8" r="3.8" fill="#6a9ff5"/><circle cx="1298.3" cy="491.6" r="3.8" fill="#6a9ff5"/><circle cx="1306.4" cy="502.8" r="3.8" fill="#6a9ff5"/><circle cx="1314.5" cy="503.4" r="3.8" fill="#6a9ff5"/><circle cx="1322.7" cy="504.4" r="3.8" fill="#6a9ff5"/><circle cx="1330.8" cy="505.7" r="3.8" fill="#6a9ff5"/><circle cx="1338.9" cy="508.7" r="3.8" fill="#6a9ff5"/><circle cx="1347" cy="507.7" r="3.8" fill="#6a9ff5"/><circle cx="1355.1" cy="496.6" r="3.8" fill="#6a9ff5"/><circle cx="1363.2" cy="497" r="3.8" fill="#6a9ff5"/><circle cx="1371.3" cy="499.5" r="3.8" fill="#6a9ff5"/><circle cx="1379.4" cy="490.8" r="3.8" fill="#6a9ff5"/><circle cx="1387.5" cy="485.4" r="3.8" fill="#6a9ff5"/><circle cx="1395.6" cy="493.1" r="3.8" fill="#6a9ff5"/><circle cx="1403.8" cy="493.1" r="3.8" fill="#6a9ff5"/><circle cx="1411.9" cy="482.8" r="3.8" fill="#6a9ff5"/><circle cx="1420" cy="481.9" r="3.8" fill="#6a9ff5"/><circle cx="1428.1" cy="496" r="3.8" fill="#6a9ff5"/><circle cx="1436.2" cy="498" r="3.8" fill="#6a9ff5"/><circle cx="1444.3" cy="491.2" r="3.8" fill="#6a9ff5"/><circle cx="1452.4" cy="497" r="3.8" fill="#6a9ff5"/><circle cx="1460.5" cy="504.4" r="3.8" fill="#6a9ff5"/><circle cx="1468.6" cy="508.7" r="3.8" fill="#6a9ff5"/><circle cx="1476.7" cy="509.6" r="3.8" fill="#6a9ff5"/><circle cx="1484.8" cy="507.7" r="3.8" fill="#6a9ff5"/><circle cx="1493" cy="500.5" r="3.8" fill="#6a9ff5"/><circle cx="1501.1" cy="494.7" r="3.8" fill="#6a9ff5"/><circle cx="1509.2" cy="492.7" r="3.8" fill="#6a9ff5"/><circle cx="1517.3" cy="504.8" r="3.8" fill="#6a9ff5"/><circle cx="1525.4" cy="518.4" r="3.8" fill="#6a9ff5"/><circle cx="1533.5" cy="509" r="3.8" fill="#6a9ff5"/><circle cx="1541.6" cy="489.8" r="3.8" fill="#6a9ff5"/><circle cx="1549.7" cy="496" r="3.8" fill="#6a9ff5"/><circle cx="1557.8" cy="510.6" r="3.8" fill="#6a9ff5"/><circle cx="1566" cy="512" r="3.8" fill="#6a9ff5"/><circle cx="1574.1" cy="519.7" r="3.8" fill="#6a9ff5"/><circle cx="1582.2" cy="535.4" r="3.8" fill="#6a9ff5"/><circle cx="1590.3" cy="539.7" r="3.8" fill="#6a9ff5"/><circle cx="1598.4" cy="531" r="3.8" fill="#6a9ff5"/><circle cx="1606.5" cy="519.9" r="3.8" fill="#6a9ff5"/><circle cx="1614.6" cy="518.4" r="3.8" fill="#6a9ff5"/><circle cx="1622.7" cy="528.1" r="3.8" fill="#6a9ff5"/><circle cx="1630.8" cy="526.1" r="3.8" fill="#6a9ff5"/><circle cx="1638.9" cy="502.8" r="3.8" fill="#6a9ff5"/><circle cx="1647" cy="486.3" r="3.8" fill="#6a9ff5"/><circle cx="1655.2" cy="484.4" r="3.8" fill="#6a9ff5"/><circle cx="1663.3" cy="477.6" r="3.8" fill="#6a9ff5"/><circle cx="1671.4" cy="473.3" r="3.8" fill="#6a9ff5"/><circle cx="1679.5" cy="474.1" r="3.8" fill="#6a9ff5"/><circle cx="1687.6" cy="469.4" r="3.8" fill="#6a9ff5"/><circle cx="1695.7" cy="472.4" r="3.8" fill="#6a9ff5"/><circle cx="1703.8" cy="484.4" r="3.8" fill="#6a9ff5"/><circle cx="1711.9" cy="481.5" r="3.8" fill="#6a9ff5"/><circle cx="1720" cy="478" r="3.8" fill="#6a9ff5"/><circle cx="1728.2" cy="472.4" r="3.8" fill="#6a9ff5"/><circle cx="1736.3" cy="462.1" r="3.8" fill="#6a9ff5"/><circle cx="1744.4" cy="478" r="3.8" fill="#6a9ff5"/><circle cx="1752.5" cy="493.1" r="3.8" fill="#6a9ff5"/><circle cx="1760.6" cy="499.3" r="3.8" fill="#6a9ff5"/><circle cx="1768.7" cy="498" r="3.8" fill="#6a9ff5"/><circle cx="1776.8" cy="493.1" r="3.8" fill="#6a9ff5"/><circle cx="1784.9" cy="491.2" r="3.8" fill="#6a9ff5"/><circle cx="1793" cy="490.2" r="3.8" fill="#6a9ff5"/><circle cx="1801.1" cy="491.2" r="3.8" fill="#6a9ff5"/><circle cx="1809.2" cy="489.2" r="3.8" fill="#6a9ff5"/><circle cx="1817.4" cy="501.9" r="3.8" fill="#6a9ff5"/><circle cx="1825.5" cy="511.6" r="3.8" fill="#6a9ff5"/><circle cx="1833.6" cy="505.4" r="3.8" fill="#6a9ff5"/><circle cx="1841.7" cy="493.7" r="3.8" fill="#6a9ff5"/><circle cx="1849.8" cy="496" r="3.8" fill="#6a9ff5"/><circle cx="1857.9" cy="506.7" r="3.8" fill="#6a9ff5"/><circle cx="1866" cy="499.3" r="3.8" fill="#6a9ff5"/><circle cx="1874.1" cy="494.5" r="3.8" fill="#6a9ff5"/><circle cx="1882.2" cy="497.4" r="3.8" fill="#6a9ff5"/><circle cx="1890.3" cy="501.3" r="3.8" fill="#6a9ff5"/><circle cx="1898.5" cy="503.8" r="3.8" fill="#6a9ff5"/><circle cx="1906.6" cy="506.3" r="3.8" fill="#6a9ff5"/><circle cx="1914.7" cy="498.4" r="3.8" fill="#6a9ff5"/><circle cx="1922.8" cy="496.6" r="3.8" fill="#6a9ff5"/><circle cx="1930.9" cy="497" r="3.8" fill="#6a9ff5"/><circle cx="1939" cy="494.1" r="3.8" fill="#6a9ff5"/><circle cx="1947.1" cy="503.4" r="3.8" fill="#6a9ff5"/><circle cx="1955.2" cy="491.2" r="3.8" fill="#6a9ff5"/><circle cx="1963.3" cy="480.9" r="3.8" fill="#6a9ff5"/><circle cx="1971.4" cy="489.2" r="3.8" fill="#6a9ff5"/><circle cx="1979.6" cy="489.2" r="3.8" fill="#6a9ff5"/><circle cx="1987.7" cy="495.7" r="3.8" fill="#6a9ff5"/><circle cx="1995.8" cy="492.7" r="3.8" fill="#6a9ff5"/><circle cx="2003.9" cy="495.1" r="3.8" fill="#6a9ff5"/><circle cx="2012" cy="508.1" r="3.8" fill="#6a9ff5"/><circle cx="2020.1" cy="507.3" r="3.8" fill="#6a9ff5"/><circle cx="2028.2" cy="498" r="3.8" fill="#6a9ff5"/><circle cx="2036.3" cy="493.5" r="3.8" fill="#6a9ff5"/><circle cx="2044.4" cy="493.7" r="3.8" fill="#6a9ff5"/><circle cx="2052.6" cy="497.6" r="3.8" fill="#6a9ff5"/><circle cx="2060.7" cy="505.2" r="3.8" fill="#6a9ff5"/><circle cx="2068.8" cy="503.2" r="3.8" fill="#6a9ff5"/><circle cx="2076.9" cy="498.6" r="3.8" fill="#6a9ff5"/><circle cx="2085" cy="499.9" r="3.8" fill="#6a9ff5"/><circle cx="2093.1" cy="505.2" r="3.8" fill="#6a9ff5"/><circle cx="2101.2" cy="508.7" r="3.8" fill="#6a9ff5"/><circle cx="2109.3" cy="503.8" r="3.8" fill="#6a9ff5"/><circle cx="2117.4" cy="498.4" r="3.8" fill="#6a9ff5"/><circle cx="2125.5" cy="505.4" r="3.8" fill="#6a9ff5"/><circle cx="2133.7" cy="505.7" r="3.8" fill="#6a9ff5"/><circle cx="2141.8" cy="496.4" r="3.8" fill="#6a9ff5"/><circle cx="2149.9" cy="493.7" r="3.8" fill="#6a9ff5"/><circle cx="2158" cy="499.9" r="3.8" fill="#6a9ff5"/><circle cx="2166.1" cy="509.6" r="3.8" fill="#6a9ff5"/><rect x="1174" y="667" width="28" height="8" rx="4" fill="#6a9ff5"/><text x="1230" y="677" font-size="25.8" fill="#ccccdc" text-anchor="start" font-weight="normal"  stroke="#ccccdc" stroke-width="0.35" stroke-linejoin="round">logins</text><rect x="1331" y="667" width="28" height="8" rx="4" fill="#c47fe2"/><text x="1386" y="677" font-size="25.8" fill="#ccccdc" text-anchor="start" font-weight="normal"  stroke="#ccccdc" stroke-width="0.35" stroke-linejoin="round">logins (-1 hour)</text><path d="M2385.86,451.55 A128 128 0 0 1 2582.18,307.98 L2579.56,311.63 A123.5 123.5 0 0 0 2390.14,450.16 Z" fill="#67a84e"/><path d="M2582.18,307.98 A128 128 0 0 1 2635.17,401.56 L2630.69,401.92 A123.5 123.5 0 0 0 2579.56,311.63 Z" fill="#e08a2e"/><path d="M2635.17,401.56 A128 128 0 0 1 2629.34,451.55 L2625.06,450.16 A123.5 123.5 0 0 0 2630.69,401.92 Z" fill="#e0393e"/><path d="M2392.05,449.55 A121.5 121.5 0 1 1 2623.15,449.55 L2591.10,439.13 A87.8 87.8 0 1 0 2424.10,439.13 Z" fill="#25262b"/><path d="M2392.05,449.55 A121.5 121.5 0 0 1 2455.32,302.32 L2469.82,332.75 A87.8 87.8 0 0 0 2424.10,439.13 Z" fill="#67a84e"/><path d="M2460.86,408.20 L2466.90,408.20 L2466.90,441.00 L2461.16,441.00 L2461.16,414.76 L2453.00,418.53 L2453.00,413.61 Z" fill="#67a84e"/><path d="M2482.06,408.20 L2488.10,408.20 L2488.10,441.00 L2482.36,441.00 L2482.36,414.76 L2474.80,418.53 L2474.80,413.61 Z" fill="#67a84e"/><text x="2495.9" y="441" font-size="47.7" fill="#67a84e" text-anchor="start" font-weight="normal"  textLength="25.5" lengthAdjust="spacingAndGlyphs" stroke="#67a84e" stroke-width="1.9" stroke-linejoin="round">4</text><text x="2536.5" y="441" font-size="47.7" fill="#67a84e" text-anchor="start" font-weight="normal"  textLength="27.6" lengthAdjust="spacingAndGlyphs" stroke="#67a84e" stroke-width="1.9" stroke-linejoin="round">B</text><path d="M2942.07,446.32 A124 124 0 0 1 3132.25,307.23 L3129.63,310.88 A119.5 119.5 0 0 0 2946.35,444.93 Z" fill="#67a84e"/><path d="M3132.25,307.23 A124 124 0 0 1 3183.59,397.88 L3179.10,398.25 A119.5 119.5 0 0 0 3129.63,310.88 Z" fill="#e08a2e"/><path d="M3183.59,397.88 A124 124 0 0 1 3177.93,446.32 L3173.65,444.93 A119.5 119.5 0 0 0 3179.10,398.25 Z" fill="#e0393e"/><path d="M2948.25,444.31 A117.5 117.5 0 1 1 3171.75,444.31 L3138.27,433.43 A82.3 82.3 0 1 0 2981.73,433.43 Z" fill="#25262b"/><path d="M2948.25,444.31 A117.5 117.5 0 0 1 2954.45,356.37 L2986.07,371.84 A82.3 82.3 0 0 0 2981.73,433.43 Z" fill="#67a84e"/><text x="3011.8" y="442.3" font-size="60.5" fill="#67a84e" text-anchor="start" font-weight="normal"  textLength="27.7" lengthAdjust="spacingAndGlyphs" stroke="#67a84e" stroke-width="1.9" stroke-linejoin="round">5</text><text x="3045.4" y="442.3" font-size="60.5" fill="#67a84e" text-anchor="start" font-weight="normal"  textLength="27.3" lengthAdjust="spacingAndGlyphs" stroke="#67a84e" stroke-width="1.9" stroke-linejoin="round">7</text><text x="3073.6" y="442.3" font-size="60.5" fill="#67a84e" text-anchor="start" font-weight="normal"  textLength="13.7" lengthAdjust="spacingAndGlyphs" stroke="#67a84e" stroke-width="1.9" stroke-linejoin="round">.</text><path d="M3097.12,400.70 L3104.70,400.70 L3104.70,442.30 L3097.42,442.30 L3097.42,409.02 L3085.70,413.80 L3085.70,407.56 Z" fill="#67a84e"/><path d="M2244.2,658.7 L2249.4,660.4 L2255.7,656.2 L2262,662.9 L2268.3,668.1 L2273.5,662.9 L2279.4,634.6 L2285.1,667.1 L2290.3,656.6 L2295.6,659.1 L2302.9,666.7 L2309.2,658.7 L2315.5,664.6 L2320.7,650.7 L2327,660.8 L2333.3,670.2 L2338.5,658.7 L2344.8,667.1 L2350.7,648.6 L2356.4,663.9 L2362.6,677.1 L2367.9,669.2 L2373.8,656.6 L2380.5,669.2 L2386.8,679.2 L2392,673.4 L2397.7,659.1 L2403.5,672.3 L2409.4,677.6 L2415.1,662.9 L2420.3,660.8 L2426.6,653.5 L2431.8,654.1 L2439.2,659.1 L2446.5,655.6 L2453.8,656.6 L2462.2,668.1 L2468.5,653.5 L2474.8,666 L2480,668.1 L2485.3,656.6 L2491.6,666 L2498.9,651.4 L2504.2,651.4 L2510.4,651.4 L2520.9,660.8 L2529.3,653.5 L2535.6,650.3 L2539.8,651.4 L2545,663.9 L2552.4,644.4 L2560.8,652.4 L2569.1,661.8 L2574.4,655.1 L2580.7,661.8 L2587,676.5 L2594.3,668.1 L2598.5,686.4 L2610,657.7 L2616.3,673.8 L2627.8,666 L2634.1,682.8 L2640.4,704.8 L2646.7,693.3 L2651.9,634.6 L2658.2,643 L2663.5,643 L2669.8,656.6 L2675,645.1 L2681.3,668.1 L2686.5,651.4 L2692.8,668.1 L2698.1,659.7 L2704.4,666.7 L2714.8,667.5 L2721.1,661.8 L2728.5,669.2 L2733.7,671.3 L2740,656.2 L2745.2,679.7 L2752.6,679.2 L2757.8,662.5 L2769.1,670.2 L2769.1,706 L2244.2,706 Z" fill="#45232a"/><path d="M2244.2,658.7 L2249.4,660.4 L2255.7,656.2 L2262,662.9 L2268.3,668.1 L2273.5,662.9 L2279.4,634.6 L2285.1,667.1 L2290.3,656.6 L2295.6,659.1 L2302.9,666.7 L2309.2,658.7 L2315.5,664.6 L2320.7,650.7 L2327,660.8 L2333.3,670.2 L2338.5,658.7 L2344.8,667.1 L2350.7,648.6 L2356.4,663.9 L2362.6,677.1 L2367.9,669.2 L2373.8,656.6 L2380.5,669.2 L2386.8,679.2 L2392,673.4 L2397.7,659.1 L2403.5,672.3 L2409.4,677.6 L2415.1,662.9 L2420.3,660.8 L2426.6,653.5 L2431.8,654.1 L2439.2,659.1 L2446.5,655.6 L2453.8,656.6 L2462.2,668.1 L2468.5,653.5 L2474.8,666 L2480,668.1 L2485.3,656.6 L2491.6,666 L2498.9,651.4 L2504.2,651.4 L2510.4,651.4 L2520.9,660.8 L2529.3,653.5 L2535.6,650.3 L2539.8,651.4 L2545,663.9 L2552.4,644.4 L2560.8,652.4 L2569.1,661.8 L2574.4,655.1 L2580.7,661.8 L2587,676.5 L2594.3,668.1 L2598.5,686.4 L2610,657.7 L2616.3,673.8 L2627.8,666 L2634.1,682.8 L2640.4,704.8 L2646.7,693.3 L2651.9,634.6 L2658.2,643 L2663.5,643 L2669.8,656.6 L2675,645.1 L2681.3,668.1 L2686.5,651.4 L2692.8,668.1 L2698.1,659.7 L2704.4,666.7 L2714.8,667.5 L2721.1,661.8 L2728.5,669.2 L2733.7,671.3 L2740,656.2 L2745.2,679.7 L2752.6,679.2 L2757.8,662.5 L2769.1,670.2" fill="none" stroke="#e0393e" stroke-width="2.3" stroke-linejoin="round"/><text x="2507.8" y="651.4" font-size="50.5" fill="#111217" text-anchor="middle" font-weight="normal" opacity="0.55" textLength="97.6" lengthAdjust="spacingAndGlyphs" stroke="#111217" stroke-width="5" stroke-linejoin="round">84.9</text><text x="2507.8" y="651.4" font-size="50.5" fill="#e8423f" text-anchor="middle" font-weight="normal"  textLength="97.6" lengthAdjust="spacingAndGlyphs" stroke="#e8423f" stroke-width="1.3" stroke-linejoin="round">84.9</text><path d="M2795.9,680.1 L2807.8,663.5 L2819.4,673.4 L2830.9,654.9 L2837.8,661.8 L2849.7,655.6 L2855,670.2 L2861.3,664.6 L2867.1,687 L2872.8,668.1 L2879.1,662.9 L2884.8,676.5 L2890.6,669.2 L2896.9,662.9 L2902.2,654.1 L2908.4,673.4 L2914.7,673.4 L2921,675.1 L2926.3,666 L2932.6,672.3 L2937.8,673.4 L2944.1,683.4 L2949.7,660.8 L2955.6,682.4 L2961.9,674.4 L2968.2,661.8 L2973.4,654.5 L2979.7,649.9 L2986,670.2 L2991.3,656.2 L2997.5,667.5 L3003.8,658.3 L3009.1,665 L3014.7,678.6 L3026.9,665 L3032.8,671.3 L3038.4,666 L3044.7,669.6 L3051,666.7 L3058.3,664.6 L3067.8,661.8 L3074.1,671.3 L3080.4,666 L3085.6,650.3 L3091.9,662.9 L3098.2,667.5 L3103.4,660.4 L3109.7,666 L3116,667.1 L3121.2,670.6 L3127.5,660.4 L3133.8,666 L3139.7,676.5 L3145.3,667.5 L3150.6,682.4 L3162.1,680.1 L3168.4,663.5 L3174.7,675.9 L3179.9,674.4 L3186.2,704.8 L3191.5,696 L3197.8,698.5 L3204,653.5 L3210.3,634.6 L3215.6,644 L3221.9,654.5 L3227.1,649.3 L3233.4,679.2 L3239.7,670.2 L3249.1,673.4 L3257.1,667.1 L3263.8,671.3 L3270.1,675.9 L3275.3,678.6 L3281.6,668.8 L3286.9,670.2 L3293.1,660.8 L3299.4,683.9 L3304.7,673 L3311,669.2 L3316.2,677.6 L3321.7,667.7 L3321.7,706 L2795.9,706 Z" fill="#22391f"/><path d="M2795.9,680.1 L2807.8,663.5 L2819.4,673.4 L2830.9,654.9 L2837.8,661.8 L2849.7,655.6 L2855,670.2 L2861.3,664.6 L2867.1,687 L2872.8,668.1 L2879.1,662.9 L2884.8,676.5 L2890.6,669.2 L2896.9,662.9 L2902.2,654.1 L2908.4,673.4 L2914.7,673.4 L2921,675.1 L2926.3,666 L2932.6,672.3 L2937.8,673.4 L2944.1,683.4 L2949.7,660.8 L2955.6,682.4 L2961.9,674.4 L2968.2,661.8 L2973.4,654.5 L2979.7,649.9 L2986,670.2 L2991.3,656.2 L2997.5,667.5 L3003.8,658.3 L3009.1,665 L3014.7,678.6 L3026.9,665 L3032.8,671.3 L3038.4,666 L3044.7,669.6 L3051,666.7 L3058.3,664.6 L3067.8,661.8 L3074.1,671.3 L3080.4,666 L3085.6,650.3 L3091.9,662.9 L3098.2,667.5 L3103.4,660.4 L3109.7,666 L3116,667.1 L3121.2,670.6 L3127.5,660.4 L3133.8,666 L3139.7,676.5 L3145.3,667.5 L3150.6,682.4 L3162.1,680.1 L3168.4,663.5 L3174.7,675.9 L3179.9,674.4 L3186.2,704.8 L3191.5,696 L3197.8,698.5 L3204,653.5 L3210.3,634.6 L3215.6,644 L3221.9,654.5 L3227.1,649.3 L3233.4,679.2 L3239.7,670.2 L3249.1,673.4 L3257.1,667.1 L3263.8,671.3 L3270.1,675.9 L3275.3,678.6 L3281.6,668.8 L3286.9,670.2 L3293.1,660.8 L3299.4,683.9 L3304.7,673 L3311,669.2 L3316.2,677.6 L3321.7,667.7" fill="none" stroke="#3aad3a" stroke-width="2.3" stroke-linejoin="round"/><text x="3060" y="651.4" font-size="50.5" fill="#111217" text-anchor="middle" font-weight="normal" opacity="0.55" textLength="85" lengthAdjust="spacingAndGlyphs" stroke="#111217" stroke-width="5" stroke-linejoin="round">283</text><text x="3060" y="651.4" font-size="50.5" fill="#3aad3a" text-anchor="middle" font-weight="normal"  textLength="85" lengthAdjust="spacingAndGlyphs" stroke="#3aad3a" stroke-width="1.3" stroke-linejoin="round">283</text><defs><linearGradient id="gt4" gradientUnits="userSpaceOnUse" x1="0" y1="860" x2="0" y2="1000"><stop offset="0" stop-color="#173961"/><stop offset="1" stop-color="#13304f"/></linearGradient></defs><path d="M106.5,927 L105.4,927 L116.3,910.7 L127.2,905.2 L140.8,893 L148.9,897.1 L154.3,907.9 L165.2,906.6 L178.8,893 L187,905.2 L193.8,931 L206,912.8 L214.1,922.9 L227.7,917.4 L235.9,921.5 L244,918.8 L257.6,925.6 L271.2,905.2 L284.8,917.4 L295.7,910.7 L306.5,924.2 L317.4,918.8 L331,916.1 L339.1,907.9 L352.7,917.4 L363.6,909.3 L375.8,872.6 L388,917.4 L404.3,899.8 L420.7,910.7 L434.2,912 L450.5,903.9 L461.4,925.6 L473.6,903 L491.3,910.7 L499.5,920.2 L510.3,921.5 L518.5,929.7 L532.1,910.7 L542.9,921.5 L559.2,906.6 L575.5,921.5 L589.1,913.4 L600,907.9 L610.9,927 L617.7,911.2 L627.2,912.8 L640.8,898.4 L657.1,903.9 L670.7,918.8 L684.2,924.2 L695.1,931 L708.7,918.8 L722.3,920.2 L733.2,916.1 L749.5,916.1 L760.3,905.2 L773.9,935.1 L784.8,921.5 L790,920.2 L803.6,922.9 L817.2,932.4 L830.8,903.9 L837.6,909.3 L844.3,925.6 L860.7,941.9 L871.5,929.7 L882.4,921.5 L890.5,905.2 L904.1,916.1 L917.7,906.6 L923.2,910.7 L936.7,902 L953,903.9 L963.9,910.7 L969.3,907.9 L980.2,913.4 L996.5,902.5 L1007.4,910.7 L1018.3,906.6 L1026.4,913.4 L1037.3,899.2 L1045.4,913.4 L1059,905.2 L1075.3,909.3 L1088.9,928.3 L1097.1,922.9 L1107.9,917.4 L1118.8,918.8 L1135.1,911.2 L1140.5,920.2 L1151.4,909.3 L1156.8,913.4 L1165,907.9 L1173.2,912 L1181.3,901.1 L1192.2,913.4 L1203,910.1 L1213.9,913.4 L1222.1,901.1 L1227.5,906.6 L1238.4,899.8 L1246.5,905.2 L1257.4,899.8 L1265.5,917.4 L1273.7,903.9 L1290,902 L1300.9,910.7 L1309,909.3 L1317.2,918.8 L1325.3,907.9 L1338.9,909.3 L1352.5,894.3 L1363.4,893 L1374.2,890.3 L1387.8,906.6 L1404.1,918.8 L1420.4,901.1 L1436.7,906.6 L1450.3,905.2 L1455.8,912 L1463.9,901.1 L1474.8,916.1 L1480,917.4 L1490.9,904.7 L1501.7,912.8 L1512.6,895.7 L1520.8,909.3 L1528.9,925.6 L1537.1,929.7 L1547.9,901.1 L1553.4,902.5 L1569.7,933.8 L1580.5,925.6 L1588.7,922.9 L1599.6,913.4 L1605,924.2 L1621.3,922.9 L1632.2,921.5 L1643,907.9 L1653.9,922.9 L1664.8,909.3 L1678.4,927 L1689.2,925.6 L1702.8,914.7 L1713.7,933.8 L1730,906.6 L1740.9,929.7 L1757.2,979.9 L1776.2,956.8 L1787.1,963.6 L1795.2,948.7 L1811.5,875.3 L1822.4,879.4 L1836,876.7 L1852.3,876.7 L1863.2,879.4 L1874,884.8 L1884.9,920.2 L1901.2,888.9 L1909.3,894.3 L1925.7,927 L1936.5,931 L1944.7,916.1 L1955.5,918.8 L1963.7,912 L1982.7,927 L1993.6,924.2 L2007.2,917.4 L2015.3,921.5 L2034.3,903.9 L2045.2,920.2 L2053.4,920.2 L2064.2,927 L2075.1,917.4 L2086,914.7 L2096.8,931 L2110.4,917.4 L2121.3,927 L2132.2,916.1 L2143,927 L2153.9,906.6 L2167.5,916.1 L2167.5,916.1 L2167.5,1196 L106.5,1196 Z" fill="url(#gt4)"/><path d="M106.5,996.2 L105.4,996.2 L116.3,982.7 L127.2,981.3 L140.8,969.1 L148.9,970.4 L154.3,979.9 L165.2,978.6 L173.4,981.3 L180.2,973.2 L192.4,1004.4 L203.3,979.9 L214.1,992.2 L227.7,988.1 L235.9,993.5 L249.5,989.5 L263,979.9 L276.6,986.7 L290.2,982.7 L306.5,992.2 L317.4,989.5 L325.5,992.2 L336.4,978.6 L347.3,986.7 L363.6,984 L375.8,947.3 L386.7,992.2 L404.3,969.1 L417.9,982.7 L434.2,985.4 L447.8,975.9 L461.4,997.6 L475,978.6 L491.3,985.4 L504.9,989.5 L515.8,1000.3 L529.3,978.6 L540.2,993.5 L553.8,974.5 L567.4,989.5 L578.3,992.2 L586.4,986.7 L600,981.3 L610.9,994.9 L617.7,978.6 L627.2,990.8 L640.8,970.4 L651.6,979.9 L670.7,993.5 L684.2,994.9 L695.1,1000.3 L708.7,985.4 L719.6,994.9 L730.4,981.3 L749.5,986.7 L760.3,984 L773.9,1004.4 L787.5,990.8 L790,989.5 L803.6,993.5 L814.5,1004.4 L830.8,971.8 L838.9,977.2 L844.3,994.9 L860.7,1007.1 L871.5,999 L879.7,992.2 L887.8,974.5 L893.3,974.5 L898.7,989.5 L904.1,990.8 L912.3,977.2 L923.2,986.7 L934,975.9 L944.9,978.6 L958.5,977.2 L963.9,984 L980.2,982.7 L996.5,977.2 L1007.4,988.1 L1018.3,979.9 L1026.4,984 L1037.3,971.8 L1048.2,986.7 L1059,971.8 L1075.3,986.7 L1088.9,1003 L1105.2,989.5 L1118.8,990.8 L1132.4,978.6 L1140.5,990.8 L1151.4,978.6 L1159.6,986.7 L1170.4,979.9 L1181.3,975.9 L1192.2,985.4 L1213.9,982.7 L1222.1,974.5 L1227.5,985.4 L1238.4,970.4 L1249.2,978.6 L1260.1,977.2 L1265.5,989.5 L1279.1,975.9 L1290,975.9 L1306.3,986.7 L1317.2,990.8 L1330.8,974.5 L1341.6,981.3 L1352.5,967.7 L1366.1,970.4 L1377,967.7 L1387.8,981.3 L1404.1,990.8 L1420.4,971.8 L1436.7,978.6 L1450.3,975.9 L1455.8,986.7 L1466.6,974.5 L1474.8,989.5 L1480,988.1 L1490.9,975.9 L1501.7,988.1 L1512.6,969.1 L1523.5,992.2 L1537.1,996.2 L1547.9,970.4 L1556.1,982.7 L1569.7,1003 L1577.8,1003 L1594.1,981.3 L1605,999 L1621.3,994.9 L1626.7,997.6 L1640.3,982.7 L1651.2,993.5 L1662.1,982.7 L1670.2,985.4 L1681.1,999 L1689.2,997.6 L1702.8,984 L1713.7,1008.5 L1719.1,1004.4 L1730,979.9 L1740.9,1004.4 L1759.9,1034.3 L1776.2,1016.6 L1787.1,1030.2 L1806.1,970.4 L1817,954.1 L1825.1,959.6 L1836,955.5 L1846.8,958.2 L1855,955.5 L1865.9,959.6 L1874,966.4 L1884.9,988.1 L1901.2,963.6 L1912.1,973.2 L1925.7,994.9 L1936.5,994.9 L1944.7,985.4 L1955.5,990.8 L1963.7,982.7 L1982.7,996.2 L2004.5,982.7 L2015.3,988.1 L2026.2,978.6 L2045.2,989.5 L2053.4,985.4 L2061.5,997.6 L2080.5,977.2 L2091.4,1000.3 L2099.6,988.1 L2115.9,997.6 L2132.2,988.1 L2143,994.9 L2156.6,978.6 L2167.5,988.1 L2167.5,988.1 L2167.5,1196 L106.5,1196 Z" fill="#21568a"/><path d="M106.5,1061.5 L105.4,1061.5 L116.3,1054.7 L127.2,1050.6 L138,1046.5 L148.9,1049.2 L157.1,1054.7 L170.7,1050.6 L181.5,1050.6 L192.4,1066.9 L200.5,1054.7 L208.7,1057.4 L219.6,1056 L235.9,1062.8 L252.2,1062.8 L265.8,1053.3 L279.3,1054.7 L290.2,1053.3 L306.5,1061.5 L314.7,1057.4 L325.5,1060.1 L336.4,1047.9 L347.3,1054.7 L363.6,1053.3 L375.8,1035.7 L388,1057.4 L404.3,1041.1 L423.4,1057.4 L439.7,1049.2 L453.3,1056 L462.8,1062.8 L475,1050.6 L488.6,1054.7 L502.2,1057.4 L513,1068.3 L521.2,1066.9 L532.1,1049.2 L542.9,1065.5 L555.2,1047.9 L567.4,1056 L578.3,1058.8 L600,1054.7 L610.9,1060.1 L617.7,1046.5 L627.2,1060.1 L640.8,1046.5 L657.1,1056 L670.7,1060.1 L684.2,1061.5 L695.1,1065.5 L708.7,1053.3 L722.3,1062.8 L733.2,1054.7 L752.2,1056 L760.3,1056 L773.9,1068.3 L787.5,1056 L790,1056 L806.3,1066.9 L817.2,1064.2 L830.8,1042.4 L844.3,1062.8 L857.9,1071 L871.5,1062.8 L887.8,1047.9 L898.7,1056 L909.6,1045.2 L923.2,1056 L936.7,1047.9 L953,1052 L963.9,1057.4 L980.2,1057.4 L991.1,1049.2 L1007.4,1058.8 L1018.3,1053.3 L1026.4,1056 L1037.3,1043.8 L1048.2,1060.1 L1059,1045.2 L1075.3,1057.4 L1088.9,1068.3 L1116.1,1061.5 L1129.7,1050.6 L1140.5,1057.4 L1151.4,1049.2 L1159.6,1057.4 L1175.9,1050.6 L1192.2,1056 L1203,1053.3 L1213.9,1058.8 L1222.1,1050.6 L1235.7,1046.5 L1252,1050.6 L1265.5,1062.8 L1279.1,1047.9 L1290,1050.6 L1300.9,1060.1 L1309,1053.3 L1317.2,1060.1 L1330.8,1046.5 L1338.9,1052 L1352.5,1039.7 L1366.1,1046.5 L1377,1045.2 L1387.8,1052 L1404.1,1057.4 L1423.2,1049.2 L1436.7,1054.7 L1450.3,1050.6 L1455.8,1057.4 L1466.6,1046.5 L1474.8,1061.5 L1480,1061.5 L1490.9,1050.6 L1501.7,1054.7 L1512.6,1045.2 L1520.8,1046.5 L1526.2,1060.1 L1537.1,1061.5 L1547.9,1046 L1553.4,1046.5 L1564.2,1066.9 L1580.5,1062.8 L1594.1,1053.3 L1605,1058.8 L1621.3,1058.8 L1632.2,1061.5 L1640.3,1050.6 L1651.2,1061.5 L1667.5,1054.7 L1678.4,1064.2 L1689.2,1060.1 L1702.8,1052 L1713.7,1075.1 L1719.1,1071 L1727.3,1050.6 L1732.7,1052 L1743.6,1076.4 L1759.9,1090 L1776.2,1072.3 L1787.1,1084.6 L1800.7,1057.4 L1817,1034.3 L1822.4,1037 L1836,1030.2 L1846.8,1035.7 L1863.2,1032.9 L1874,1041.1 L1884.9,1056 L1903.9,1041.1 L1912.1,1043.8 L1925.7,1065.5 L1936.5,1061.5 L1944.7,1057.4 L1950.1,1062.8 L1961,1053.3 L1971.8,1057.4 L1985.4,1061.5 L1996.3,1057.4 L2009.9,1061.5 L2026.2,1046.5 L2045.2,1056 L2053.4,1054.7 L2058.8,1064.2 L2072.4,1056 L2083.3,1054.7 L2094.1,1068.3 L2105,1056 L2121.3,1065.5 L2140.3,1054.7 L2148.5,1058.8 L2156.6,1050.6 L2167.5,1061.5 L2167.5,1061.5 L2167.5,1196 L106.5,1196 Z" fill="#3d6288"/><path d="M106.5,1127.5 L105.4,1127.5 L121.7,1119.3 L140.8,1118.5 L154.3,1125.9 L167.9,1122.6 L181.5,1124 L189.7,1129.4 L197.8,1124 L208.7,1129.4 L219.6,1117.2 L233.2,1128.6 L252.2,1129.4 L265.8,1124.8 L284.8,1124 L301.1,1130.2 L314.7,1124.8 L325.5,1127.5 L336.4,1117.7 L347.3,1124 L360.9,1122.6 L369,1115 L379.9,1124 L393.5,1128.6 L404.3,1118 L415.2,1125.3 L434.2,1124.8 L447.8,1125.9 L464.1,1129.4 L477.7,1119.9 L491.3,1128 L502.2,1122.6 L513,1132.1 L532.1,1124 L542.9,1127.5 L556.5,1123.2 L567.4,1126.7 L589.1,1122.6 L605.4,1128 L616.3,1121.2 L627.2,1128.6 L640.8,1122.6 L654.3,1126.7 L670.7,1126.7 L692.4,1133.5 L706,1122.6 L719.6,1127.5 L730.4,1124 L757.6,1126.7 L771.2,1132.1 L784.8,1125.3 L790,1122.6 L806.3,1132.1 L817.2,1129.4 L830.8,1119.9 L844.3,1130.8 L857.9,1133.5 L871.5,1126.7 L887.8,1119.9 L898.7,1126.7 L909.6,1119.9 L923.2,1128 L939.5,1124 L950.3,1129.4 L966.6,1125.3 L977.5,1126.7 L991.1,1121.2 L1004.7,1129.4 L1015.5,1122.6 L1029.1,1121.2 L1042.7,1130.8 L1059,1119.9 L1078,1128 L1097.1,1132.1 L1107.9,1128 L1116.1,1130.8 L1127,1124 L1140.5,1124 L1148.7,1121.2 L1156.8,1126.7 L1165,1119.9 L1181.3,1124 L1192.2,1125.3 L1205.8,1122.6 L1219.3,1129.4 L1235.7,1117.2 L1246.5,1122.6 L1257.4,1121.2 L1265.5,1132.9 L1279.1,1122.6 L1290,1119.9 L1300.9,1129.4 L1309,1124 L1317.2,1128 L1328,1118.5 L1341.6,1124 L1352.5,1121.2 L1368.8,1117.2 L1382.4,1122.6 L1393.3,1119.9 L1404.1,1129.4 L1420.4,1124 L1436.7,1125.3 L1450.3,1122.6 L1458.5,1128 L1466.6,1121.2 L1474.8,1129.4 L1480,1124 L1490.9,1118.5 L1504.5,1125.9 L1515.3,1122.6 L1526.2,1130.8 L1545.2,1118.5 L1561.5,1128.6 L1583.3,1130.8 L1591.4,1125.3 L1605,1126.7 L1615.9,1119.9 L1626.7,1124 L1640.3,1117.7 L1648.5,1125.3 L1656.6,1123.4 L1670.2,1129.4 L1686.5,1130.8 L1702.8,1124 L1713.7,1136.2 L1724.6,1122.6 L1740.9,1132.1 L1759.9,1147.1 L1773.5,1137.6 L1781.6,1140.3 L1800.7,1121.2 L1814.2,1115.8 L1830.5,1112.3 L1841.4,1118.5 L1855,1115.8 L1863.2,1109 L1879.5,1125.3 L1898.5,1122.6 L1914.8,1122.6 L1925.7,1132.1 L1939.2,1124 L1950.1,1130.2 L1961,1124.8 L1980,1130.2 L1990.9,1125.3 L2007.2,1124.8 L2012.6,1128 L2023.5,1118 L2039.8,1124.8 L2050.7,1124 L2061.5,1130.8 L2075.1,1124 L2094.1,1129.4 L2105,1125.9 L2121.3,1132.1 L2132.2,1126.7 L2140.3,1129.4 L2151.2,1124 L2167.5,1131.3 L2167.5,1131.3 L2167.5,1196 L106.5,1196 Z" fill="#7b919b"/><rect x="104" y="1195.3" width="2067.5" height="2" fill="rgba(210,215,235,0.16)"/><text x="92" y="1204.3" font-size="24.2" fill="#c8c8d4" text-anchor="end" font-weight="normal"  stroke="#c8c8d4" stroke-width="0.35" stroke-linejoin="round">0</text><rect x="104" y="1072.3" width="2067.5" height="2" fill="rgba(210,215,235,0.16)"/><text x="92" y="1081.3" font-size="24.2" fill="#c8c8d4" text-anchor="end" font-weight="normal"  stroke="#c8c8d4" stroke-width="0.35" stroke-linejoin="round">50</text><rect x="104" y="949.3" width="2067.5" height="2" fill="rgba(210,215,235,0.16)"/><text x="92" y="958.3" font-size="24.2" fill="#c8c8d4" text-anchor="end" font-weight="normal"  stroke="#c8c8d4" stroke-width="0.35" stroke-linejoin="round">100</text><rect x="104" y="826.3" width="2067.5" height="2" fill="rgba(210,215,235,0.16)"/><text x="92" y="835.3" font-size="24.2" fill="#c8c8d4" text-anchor="end" font-weight="normal"  stroke="#c8c8d4" stroke-width="0.35" stroke-linejoin="round">150</text><rect x="112" y="826" width="2" height="370" fill="rgba(210,215,235,0.16)"/><text x="113" y="1233" font-size="24.2" fill="#c8c8d4" text-anchor="middle" font-weight="normal"  stroke="#c8c8d4" stroke-width="0.35" stroke-linejoin="round">16:50</text><rect x="284.1" y="826" width="2" height="370" fill="rgba(210,215,235,0.16)"/><text x="285.1" y="1233" font-size="24.2" fill="#c8c8d4" text-anchor="middle" font-weight="normal"  stroke="#c8c8d4" stroke-width="0.35" stroke-linejoin="round">16:55</text><rect x="456.3" y="826" width="2" height="370" fill="rgba(210,215,235,0.16)"/><text x="457.3" y="1233" font-size="24.2" fill="#c8c8d4" text-anchor="middle" font-weight="normal"  stroke="#c8c8d4" stroke-width="0.35" stroke-linejoin="round">17:00</text><rect x="628.5" y="826" width="2" height="370" fill="rgba(210,215,235,0.16)"/><text x="629.5" y="1233" font-size="24.2" fill="#c8c8d4" text-anchor="middle" font-weight="normal"  stroke="#c8c8d4" stroke-width="0.35" stroke-linejoin="round">17:05</text><rect x="800.6" y="826" width="2" height="370" fill="rgba(210,215,235,0.16)"/><text x="801.6" y="1233" font-size="24.2" fill="#c8c8d4" text-anchor="middle" font-weight="normal"  stroke="#c8c8d4" stroke-width="0.35" stroke-linejoin="round">17:10</text><rect x="972.8" y="826" width="2" height="370" fill="rgba(210,215,235,0.16)"/><text x="973.8" y="1233" font-size="24.2" fill="#c8c8d4" text-anchor="middle" font-weight="normal"  stroke="#c8c8d4" stroke-width="0.35" stroke-linejoin="round">17:15</text><rect x="1144.9" y="826" width="2" height="370" fill="rgba(210,215,235,0.16)"/><text x="1145.9" y="1233" font-size="24.2" fill="#c8c8d4" text-anchor="middle" font-weight="normal"  stroke="#c8c8d4" stroke-width="0.35" stroke-linejoin="round">17:20</text><rect x="1317" y="826" width="2" height="370" fill="rgba(210,215,235,0.16)"/><text x="1318" y="1233" font-size="24.2" fill="#c8c8d4" text-anchor="middle" font-weight="normal"  stroke="#c8c8d4" stroke-width="0.35" stroke-linejoin="round">17:25</text><rect x="1489.2" y="826" width="2" height="370" fill="rgba(210,215,235,0.16)"/><text x="1490.2" y="1233" font-size="24.2" fill="#c8c8d4" text-anchor="middle" font-weight="normal"  stroke="#c8c8d4" stroke-width="0.35" stroke-linejoin="round">17:30</text><rect x="1661.4" y="826" width="2" height="370" fill="rgba(210,215,235,0.16)"/><text x="1662.4" y="1233" font-size="24.2" fill="#c8c8d4" text-anchor="middle" font-weight="normal"  stroke="#c8c8d4" stroke-width="0.35" stroke-linejoin="round">17:35</text><rect x="1833.5" y="826" width="2" height="370" fill="rgba(210,215,235,0.16)"/><text x="1834.5" y="1233" font-size="24.2" fill="#c8c8d4" text-anchor="middle" font-weight="normal"  stroke="#c8c8d4" stroke-width="0.35" stroke-linejoin="round">17:40</text><rect x="2005.7" y="826" width="2" height="370" fill="rgba(210,215,235,0.16)"/><text x="2006.7" y="1233" font-size="24.2" fill="#c8c8d4" text-anchor="middle" font-weight="normal"  stroke="#c8c8d4" stroke-width="0.35" stroke-linejoin="round">17:45</text><path d="M106.5,927 L105.4,927 L116.3,910.7 L127.2,905.2 L140.8,893 L148.9,897.1 L154.3,907.9 L165.2,906.6 L178.8,893 L187,905.2 L193.8,931 L206,912.8 L214.1,922.9 L227.7,917.4 L235.9,921.5 L244,918.8 L257.6,925.6 L271.2,905.2 L284.8,917.4 L295.7,910.7 L306.5,924.2 L317.4,918.8 L331,916.1 L339.1,907.9 L352.7,917.4 L363.6,909.3 L375.8,872.6 L388,917.4 L404.3,899.8 L420.7,910.7 L434.2,912 L450.5,903.9 L461.4,925.6 L473.6,903 L491.3,910.7 L499.5,920.2 L510.3,921.5 L518.5,929.7 L532.1,910.7 L542.9,921.5 L559.2,906.6 L575.5,921.5 L589.1,913.4 L600,907.9 L610.9,927 L617.7,911.2 L627.2,912.8 L640.8,898.4 L657.1,903.9 L670.7,918.8 L684.2,924.2 L695.1,931 L708.7,918.8 L722.3,920.2 L733.2,916.1 L749.5,916.1 L760.3,905.2 L773.9,935.1 L784.8,921.5 L790,920.2 L803.6,922.9 L817.2,932.4 L830.8,903.9 L837.6,909.3 L844.3,925.6 L860.7,941.9 L871.5,929.7 L882.4,921.5 L890.5,905.2 L904.1,916.1 L917.7,906.6 L923.2,910.7 L936.7,902 L953,903.9 L963.9,910.7 L969.3,907.9 L980.2,913.4 L996.5,902.5 L1007.4,910.7 L1018.3,906.6 L1026.4,913.4 L1037.3,899.2 L1045.4,913.4 L1059,905.2 L1075.3,909.3 L1088.9,928.3 L1097.1,922.9 L1107.9,917.4 L1118.8,918.8 L1135.1,911.2 L1140.5,920.2 L1151.4,909.3 L1156.8,913.4 L1165,907.9 L1173.2,912 L1181.3,901.1 L1192.2,913.4 L1203,910.1 L1213.9,913.4 L1222.1,901.1 L1227.5,906.6 L1238.4,899.8 L1246.5,905.2 L1257.4,899.8 L1265.5,917.4 L1273.7,903.9 L1290,902 L1300.9,910.7 L1309,909.3 L1317.2,918.8 L1325.3,907.9 L1338.9,909.3 L1352.5,894.3 L1363.4,893 L1374.2,890.3 L1387.8,906.6 L1404.1,918.8 L1420.4,901.1 L1436.7,906.6 L1450.3,905.2 L1455.8,912 L1463.9,901.1 L1474.8,916.1 L1480,917.4 L1490.9,904.7 L1501.7,912.8 L1512.6,895.7 L1520.8,909.3 L1528.9,925.6 L1537.1,929.7 L1547.9,901.1 L1553.4,902.5 L1569.7,933.8 L1580.5,925.6 L1588.7,922.9 L1599.6,913.4 L1605,924.2 L1621.3,922.9 L1632.2,921.5 L1643,907.9 L1653.9,922.9 L1664.8,909.3 L1678.4,927 L1689.2,925.6 L1702.8,914.7 L1713.7,933.8 L1730,906.6 L1740.9,929.7 L1757.2,979.9 L1776.2,956.8 L1787.1,963.6 L1795.2,948.7 L1811.5,875.3 L1822.4,879.4 L1836,876.7 L1852.3,876.7 L1863.2,879.4 L1874,884.8 L1884.9,920.2 L1901.2,888.9 L1909.3,894.3 L1925.7,927 L1936.5,931 L1944.7,916.1 L1955.5,918.8 L1963.7,912 L1982.7,927 L1993.6,924.2 L2007.2,917.4 L2015.3,921.5 L2034.3,903.9 L2045.2,920.2 L2053.4,920.2 L2064.2,927 L2075.1,917.4 L2086,914.7 L2096.8,931 L2110.4,917.4 L2121.3,927 L2132.2,916.1 L2143,927 L2153.9,906.6 L2167.5,916.1 L2167.5,916.1" fill="none" stroke="#1f4e84" stroke-width="2" stroke-linejoin="round"/><path d="M106.5,996.2 L105.4,996.2 L116.3,982.7 L127.2,981.3 L140.8,969.1 L148.9,970.4 L154.3,979.9 L165.2,978.6 L173.4,981.3 L180.2,973.2 L192.4,1004.4 L203.3,979.9 L214.1,992.2 L227.7,988.1 L235.9,993.5 L249.5,989.5 L263,979.9 L276.6,986.7 L290.2,982.7 L306.5,992.2 L317.4,989.5 L325.5,992.2 L336.4,978.6 L347.3,986.7 L363.6,984 L375.8,947.3 L386.7,992.2 L404.3,969.1 L417.9,982.7 L434.2,985.4 L447.8,975.9 L461.4,997.6 L475,978.6 L491.3,985.4 L504.9,989.5 L515.8,1000.3 L529.3,978.6 L540.2,993.5 L553.8,974.5 L567.4,989.5 L578.3,992.2 L586.4,986.7 L600,981.3 L610.9,994.9 L617.7,978.6 L627.2,990.8 L640.8,970.4 L651.6,979.9 L670.7,993.5 L684.2,994.9 L695.1,1000.3 L708.7,985.4 L719.6,994.9 L730.4,981.3 L749.5,986.7 L760.3,984 L773.9,1004.4 L787.5,990.8 L790,989.5 L803.6,993.5 L814.5,1004.4 L830.8,971.8 L838.9,977.2 L844.3,994.9 L860.7,1007.1 L871.5,999 L879.7,992.2 L887.8,974.5 L893.3,974.5 L898.7,989.5 L904.1,990.8 L912.3,977.2 L923.2,986.7 L934,975.9 L944.9,978.6 L958.5,977.2 L963.9,984 L980.2,982.7 L996.5,977.2 L1007.4,988.1 L1018.3,979.9 L1026.4,984 L1037.3,971.8 L1048.2,986.7 L1059,971.8 L1075.3,986.7 L1088.9,1003 L1105.2,989.5 L1118.8,990.8 L1132.4,978.6 L1140.5,990.8 L1151.4,978.6 L1159.6,986.7 L1170.4,979.9 L1181.3,975.9 L1192.2,985.4 L1213.9,982.7 L1222.1,974.5 L1227.5,985.4 L1238.4,970.4 L1249.2,978.6 L1260.1,977.2 L1265.5,989.5 L1279.1,975.9 L1290,975.9 L1306.3,986.7 L1317.2,990.8 L1330.8,974.5 L1341.6,981.3 L1352.5,967.7 L1366.1,970.4 L1377,967.7 L1387.8,981.3 L1404.1,990.8 L1420.4,971.8 L1436.7,978.6 L1450.3,975.9 L1455.8,986.7 L1466.6,974.5 L1474.8,989.5 L1480,988.1 L1490.9,975.9 L1501.7,988.1 L1512.6,969.1 L1523.5,992.2 L1537.1,996.2 L1547.9,970.4 L1556.1,982.7 L1569.7,1003 L1577.8,1003 L1594.1,981.3 L1605,999 L1621.3,994.9 L1626.7,997.6 L1640.3,982.7 L1651.2,993.5 L1662.1,982.7 L1670.2,985.4 L1681.1,999 L1689.2,997.6 L1702.8,984 L1713.7,1008.5 L1719.1,1004.4 L1730,979.9 L1740.9,1004.4 L1759.9,1034.3 L1776.2,1016.6 L1787.1,1030.2 L1806.1,970.4 L1817,954.1 L1825.1,959.6 L1836,955.5 L1846.8,958.2 L1855,955.5 L1865.9,959.6 L1874,966.4 L1884.9,988.1 L1901.2,963.6 L1912.1,973.2 L1925.7,994.9 L1936.5,994.9 L1944.7,985.4 L1955.5,990.8 L1963.7,982.7 L1982.7,996.2 L2004.5,982.7 L2015.3,988.1 L2026.2,978.6 L2045.2,989.5 L2053.4,985.4 L2061.5,997.6 L2080.5,977.2 L2091.4,1000.3 L2099.6,988.1 L2115.9,997.6 L2132.2,988.1 L2143,994.9 L2156.6,978.6 L2167.5,988.1 L2167.5,988.1" fill="none" stroke="#3a80c8" stroke-width="2" stroke-linejoin="round"/><path d="M106.5,1061.5 L105.4,1061.5 L116.3,1054.7 L127.2,1050.6 L138,1046.5 L148.9,1049.2 L157.1,1054.7 L170.7,1050.6 L181.5,1050.6 L192.4,1066.9 L200.5,1054.7 L208.7,1057.4 L219.6,1056 L235.9,1062.8 L252.2,1062.8 L265.8,1053.3 L279.3,1054.7 L290.2,1053.3 L306.5,1061.5 L314.7,1057.4 L325.5,1060.1 L336.4,1047.9 L347.3,1054.7 L363.6,1053.3 L375.8,1035.7 L388,1057.4 L404.3,1041.1 L423.4,1057.4 L439.7,1049.2 L453.3,1056 L462.8,1062.8 L475,1050.6 L488.6,1054.7 L502.2,1057.4 L513,1068.3 L521.2,1066.9 L532.1,1049.2 L542.9,1065.5 L555.2,1047.9 L567.4,1056 L578.3,1058.8 L600,1054.7 L610.9,1060.1 L617.7,1046.5 L627.2,1060.1 L640.8,1046.5 L657.1,1056 L670.7,1060.1 L684.2,1061.5 L695.1,1065.5 L708.7,1053.3 L722.3,1062.8 L733.2,1054.7 L752.2,1056 L760.3,1056 L773.9,1068.3 L787.5,1056 L790,1056 L806.3,1066.9 L817.2,1064.2 L830.8,1042.4 L844.3,1062.8 L857.9,1071 L871.5,1062.8 L887.8,1047.9 L898.7,1056 L909.6,1045.2 L923.2,1056 L936.7,1047.9 L953,1052 L963.9,1057.4 L980.2,1057.4 L991.1,1049.2 L1007.4,1058.8 L1018.3,1053.3 L1026.4,1056 L1037.3,1043.8 L1048.2,1060.1 L1059,1045.2 L1075.3,1057.4 L1088.9,1068.3 L1116.1,1061.5 L1129.7,1050.6 L1140.5,1057.4 L1151.4,1049.2 L1159.6,1057.4 L1175.9,1050.6 L1192.2,1056 L1203,1053.3 L1213.9,1058.8 L1222.1,1050.6 L1235.7,1046.5 L1252,1050.6 L1265.5,1062.8 L1279.1,1047.9 L1290,1050.6 L1300.9,1060.1 L1309,1053.3 L1317.2,1060.1 L1330.8,1046.5 L1338.9,1052 L1352.5,1039.7 L1366.1,1046.5 L1377,1045.2 L1387.8,1052 L1404.1,1057.4 L1423.2,1049.2 L1436.7,1054.7 L1450.3,1050.6 L1455.8,1057.4 L1466.6,1046.5 L1474.8,1061.5 L1480,1061.5 L1490.9,1050.6 L1501.7,1054.7 L1512.6,1045.2 L1520.8,1046.5 L1526.2,1060.1 L1537.1,1061.5 L1547.9,1046 L1553.4,1046.5 L1564.2,1066.9 L1580.5,1062.8 L1594.1,1053.3 L1605,1058.8 L1621.3,1058.8 L1632.2,1061.5 L1640.3,1050.6 L1651.2,1061.5 L1667.5,1054.7 L1678.4,1064.2 L1689.2,1060.1 L1702.8,1052 L1713.7,1075.1 L1719.1,1071 L1727.3,1050.6 L1732.7,1052 L1743.6,1076.4 L1759.9,1090 L1776.2,1072.3 L1787.1,1084.6 L1800.7,1057.4 L1817,1034.3 L1822.4,1037 L1836,1030.2 L1846.8,1035.7 L1863.2,1032.9 L1874,1041.1 L1884.9,1056 L1903.9,1041.1 L1912.1,1043.8 L1925.7,1065.5 L1936.5,1061.5 L1944.7,1057.4 L1950.1,1062.8 L1961,1053.3 L1971.8,1057.4 L1985.4,1061.5 L1996.3,1057.4 L2009.9,1061.5 L2026.2,1046.5 L2045.2,1056 L2053.4,1054.7 L2058.8,1064.2 L2072.4,1056 L2083.3,1054.7 L2094.1,1068.3 L2105,1056 L2121.3,1065.5 L2140.3,1054.7 L2148.5,1058.8 L2156.6,1050.6 L2167.5,1061.5 L2167.5,1061.5" fill="none" stroke="#5898d8" stroke-width="2" stroke-linejoin="round"/><path d="M106.5,1127.5 L105.4,1127.5 L121.7,1119.3 L140.8,1118.5 L154.3,1125.9 L167.9,1122.6 L181.5,1124 L189.7,1129.4 L197.8,1124 L208.7,1129.4 L219.6,1117.2 L233.2,1128.6 L252.2,1129.4 L265.8,1124.8 L284.8,1124 L301.1,1130.2 L314.7,1124.8 L325.5,1127.5 L336.4,1117.7 L347.3,1124 L360.9,1122.6 L369,1115 L379.9,1124 L393.5,1128.6 L404.3,1118 L415.2,1125.3 L434.2,1124.8 L447.8,1125.9 L464.1,1129.4 L477.7,1119.9 L491.3,1128 L502.2,1122.6 L513,1132.1 L532.1,1124 L542.9,1127.5 L556.5,1123.2 L567.4,1126.7 L589.1,1122.6 L605.4,1128 L616.3,1121.2 L627.2,1128.6 L640.8,1122.6 L654.3,1126.7 L670.7,1126.7 L692.4,1133.5 L706,1122.6 L719.6,1127.5 L730.4,1124 L757.6,1126.7 L771.2,1132.1 L784.8,1125.3 L790,1122.6 L806.3,1132.1 L817.2,1129.4 L830.8,1119.9 L844.3,1130.8 L857.9,1133.5 L871.5,1126.7 L887.8,1119.9 L898.7,1126.7 L909.6,1119.9 L923.2,1128 L939.5,1124 L950.3,1129.4 L966.6,1125.3 L977.5,1126.7 L991.1,1121.2 L1004.7,1129.4 L1015.5,1122.6 L1029.1,1121.2 L1042.7,1130.8 L1059,1119.9 L1078,1128 L1097.1,1132.1 L1107.9,1128 L1116.1,1130.8 L1127,1124 L1140.5,1124 L1148.7,1121.2 L1156.8,1126.7 L1165,1119.9 L1181.3,1124 L1192.2,1125.3 L1205.8,1122.6 L1219.3,1129.4 L1235.7,1117.2 L1246.5,1122.6 L1257.4,1121.2 L1265.5,1132.9 L1279.1,1122.6 L1290,1119.9 L1300.9,1129.4 L1309,1124 L1317.2,1128 L1328,1118.5 L1341.6,1124 L1352.5,1121.2 L1368.8,1117.2 L1382.4,1122.6 L1393.3,1119.9 L1404.1,1129.4 L1420.4,1124 L1436.7,1125.3 L1450.3,1122.6 L1458.5,1128 L1466.6,1121.2 L1474.8,1129.4 L1480,1124 L1490.9,1118.5 L1504.5,1125.9 L1515.3,1122.6 L1526.2,1130.8 L1545.2,1118.5 L1561.5,1128.6 L1583.3,1130.8 L1591.4,1125.3 L1605,1126.7 L1615.9,1119.9 L1626.7,1124 L1640.3,1117.7 L1648.5,1125.3 L1656.6,1123.4 L1670.2,1129.4 L1686.5,1130.8 L1702.8,1124 L1713.7,1136.2 L1724.6,1122.6 L1740.9,1132.1 L1759.9,1147.1 L1773.5,1137.6 L1781.6,1140.3 L1800.7,1121.2 L1814.2,1115.8 L1830.5,1112.3 L1841.4,1118.5 L1855,1115.8 L1863.2,1109 L1879.5,1125.3 L1898.5,1122.6 L1914.8,1122.6 L1925.7,1132.1 L1939.2,1124 L1950.1,1130.2 L1961,1124.8 L1980,1130.2 L1990.9,1125.3 L2007.2,1124.8 L2012.6,1128 L2023.5,1118 L2039.8,1124.8 L2050.7,1124 L2061.5,1130.8 L2075.1,1124 L2094.1,1129.4 L2105,1125.9 L2121.3,1132.1 L2132.2,1126.7 L2140.3,1129.4 L2151.2,1124 L2167.5,1131.3 L2167.5,1131.3" fill="none" stroke="#c4e2fa" stroke-width="2" stroke-linejoin="round"/><rect x="70" y="1274" width="28" height="8" rx="4" fill="#b8e0f8"/><text x="127" y="1284" font-size="24.4" fill="#ccccdc" text-anchor="start" font-weight="normal"  textLength="166.5" lengthAdjust="spacingAndGlyphs" stroke="#ccccdc" stroke-width="0.35" stroke-linejoin="round">web_server_01</text><rect x="327" y="1274" width="28" height="8" rx="4" fill="#4f93dc"/><text x="383" y="1284" font-size="24.4" fill="#ccccdc" text-anchor="start" font-weight="normal"  textLength="166.5" lengthAdjust="spacingAndGlyphs" stroke="#ccccdc" stroke-width="0.35" stroke-linejoin="round">web_server_02</text><rect x="589" y="1274" width="28" height="8" rx="4" fill="#2f7fd0"/><text x="645" y="1284" font-size="24.4" fill="#ccccdc" text-anchor="start" font-weight="normal"  textLength="166.5" lengthAdjust="spacingAndGlyphs" stroke="#ccccdc" stroke-width="0.35" stroke-linejoin="round">web_server_03</text><rect x="851" y="1274" width="28" height="8" rx="4" fill="#1d4f8c"/><text x="907" y="1284" font-size="24.4" fill="#ccccdc" text-anchor="start" font-weight="normal"  textLength="166.5" lengthAdjust="spacingAndGlyphs" stroke="#ccccdc" stroke-width="0.35" stroke-linejoin="round">web_server_04</text><rect x="2257.6" y="861" width="194" height="392" rx="3" fill="#222328"/><rect x="2257.6" y="1249.6" width="194" height="3.4" rx="2" fill="#2c4469"/><rect x="2257.6" y="1249.6" width="194" height="4" rx="2" fill="#5a96f0"/><text x="2355" y="848.2" font-size="52" fill="#5a96f0" text-anchor="middle" font-weight="normal"  textLength="133.4" lengthAdjust="spacingAndGlyphs" stroke="#5a96f0" stroke-width="0.5" stroke-linejoin="round">0.400</text><text x="2354.6" y="1285.9" font-size="29.5" fill="#ccccdc" text-anchor="middle" font-weight="normal"  textLength="110.5" lengthAdjust="spacingAndGlyphs" stroke="#ccccdc" stroke-width="0.35" stroke-linejoin="round">A-series</text><rect x="2472" y="861" width="194" height="392" rx="3" fill="#222328"/><rect x="2472" y="1143" width="194" height="110" rx="2" fill="#2c4469"/><rect x="2472" y="1143" width="194" height="4" rx="2" fill="#5a96f0"/><text x="2569.6" y="848.2" font-size="52" fill="#5a96f0" text-anchor="middle" font-weight="normal"  textLength="89.9" lengthAdjust="spacingAndGlyphs" stroke="#5a96f0" stroke-width="0.5" stroke-linejoin="round">27.7</text><text x="2569" y="1285.9" font-size="29.5" fill="#ccccdc" text-anchor="middle" font-weight="normal"  textLength="110.5" lengthAdjust="spacingAndGlyphs" stroke="#ccccdc" stroke-width="0.35" stroke-linejoin="round">B-series</text><rect x="2687" y="861" width="194" height="392" rx="3" fill="#222328"/><rect x="2687" y="1105.7" width="194" height="147.3" rx="2" fill="#2c4469"/><rect x="2687" y="1105.7" width="194" height="4" rx="2" fill="#5a96f0"/><text x="2784.2" y="848.2" font-size="52" fill="#5a96f0" text-anchor="middle" font-weight="normal"  textLength="82" lengthAdjust="spacingAndGlyphs" stroke="#5a96f0" stroke-width="0.5" stroke-linejoin="round">37.1</text><text x="2784" y="1285.9" font-size="29.5" fill="#ccccdc" text-anchor="middle" font-weight="normal"  textLength="112.7" lengthAdjust="spacingAndGlyphs" stroke="#ccccdc" stroke-width="0.35" stroke-linejoin="round">C-series</text><rect x="2901" y="861" width="194" height="392" rx="3" fill="#222328"/><rect x="2901" y="987.2" width="194" height="265.8" rx="2" fill="#4d3b62"/><rect x="2901" y="987.2" width="194" height="4" rx="2" fill="#b877d9"/><text x="2997.4" y="848.2" font-size="52" fill="#b877d9" text-anchor="middle" font-weight="normal"  textLength="98.7" lengthAdjust="spacingAndGlyphs" stroke="#b877d9" stroke-width="0.5" stroke-linejoin="round">66.5</text><text x="2998" y="1285.9" font-size="29.5" fill="#ccccdc" text-anchor="middle" font-weight="normal"  textLength="113" lengthAdjust="spacingAndGlyphs" stroke="#ccccdc" stroke-width="0.35" stroke-linejoin="round">D-series</text><rect x="3116" y="861" width="194" height="392" rx="3" fill="#222328"/><rect x="3116" y="1169.3" width="194" height="83.7" rx="2" fill="#2c4469"/><rect x="3116" y="1169.3" width="194" height="4" rx="2" fill="#5a96f0"/><text x="3211.8" y="848.2" font-size="52" fill="#5a96f0" text-anchor="middle" font-weight="normal"  textLength="90.8" lengthAdjust="spacingAndGlyphs" stroke="#5a96f0" stroke-width="0.5" stroke-linejoin="round">21.2</text><text x="3213" y="1285.9" font-size="29.5" fill="#ccccdc" text-anchor="middle" font-weight="normal"  textLength="109.6" lengthAdjust="spacingAndGlyphs" stroke="#ccccdc" stroke-width="0.35" stroke-linejoin="round">E-series</text><clipPath id="c_cl"><rect x="117.4" y="1400" width="2848.6" height="400"/></clipPath><rect x="117.4" y="1781" width="2848.6" height="2" fill="#424449"/><text x="105" y="1790" font-size="24.2" fill="#c8c8d4" text-anchor="end" font-weight="normal"  stroke="#c8c8d4" stroke-width="0.35" stroke-linejoin="round">0 ms</text><rect x="117.4" y="1711.5" width="2848.6" height="2" fill="#424449"/><text x="105" y="1720.5" font-size="24.2" fill="#c8c8d4" text-anchor="end" font-weight="normal"  stroke="#c8c8d4" stroke-width="0.35" stroke-linejoin="round">1 s</text><rect x="117.4" y="1642" width="2848.6" height="2" fill="#424449"/><text x="105" y="1651" font-size="24.2" fill="#c8c8d4" text-anchor="end" font-weight="normal"  stroke="#c8c8d4" stroke-width="0.35" stroke-linejoin="round">2 s</text><rect x="117.4" y="1572.5" width="2848.6" height="2" fill="#424449"/><text x="105" y="1581.5" font-size="24.2" fill="#c8c8d4" text-anchor="end" font-weight="normal"  stroke="#c8c8d4" stroke-width="0.35" stroke-linejoin="round">3 s</text><rect x="117.4" y="1503" width="2848.6" height="2" fill="#424449"/><text x="105" y="1512" font-size="24.2" fill="#c8c8d4" text-anchor="end" font-weight="normal"  stroke="#c8c8d4" stroke-width="0.35" stroke-linejoin="round">4 s</text><rect x="117.4" y="1433.5" width="2848.6" height="2" fill="#424449"/><text x="105" y="1442.5" font-size="24.2" fill="#c8c8d4" text-anchor="end" font-weight="normal"  stroke="#c8c8d4" stroke-width="0.35" stroke-linejoin="round">5 s</text><rect x="128" y="1434" width="2" height="348" fill="#424449"/><text x="129" y="1820" font-size="24.2" fill="#c8c8d4" text-anchor="middle" font-weight="normal"  stroke="#c8c8d4" stroke-width="0.35" stroke-linejoin="round">16:50</text><rect x="365.2" y="1434" width="2" height="348" fill="#424449"/><text x="366.2" y="1820" font-size="24.2" fill="#c8c8d4" text-anchor="middle" font-weight="normal"  stroke="#c8c8d4" stroke-width="0.35" stroke-linejoin="round">16:55</text><rect x="602.4" y="1434" width="2" height="348" fill="#424449"/><text x="603.4" y="1820" font-size="24.2" fill="#c8c8d4" text-anchor="middle" font-weight="normal"  stroke="#c8c8d4" stroke-width="0.35" stroke-linejoin="round">17:00</text><rect x="839.6" y="1434" width="2" height="348" fill="#424449"/><text x="840.6" y="1820" font-size="24.2" fill="#c8c8d4" text-anchor="middle" font-weight="normal"  stroke="#c8c8d4" stroke-width="0.35" stroke-linejoin="round">17:05</text><rect x="1076.8" y="1434" width="2" height="348" fill="#424449"/><text x="1077.8" y="1820" font-size="24.2" fill="#c8c8d4" text-anchor="middle" font-weight="normal"  stroke="#c8c8d4" stroke-width="0.35" stroke-linejoin="round">17:10</text><rect x="1314" y="1434" width="2" height="348" fill="#424449"/><text x="1315" y="1820" font-size="24.2" fill="#c8c8d4" text-anchor="middle" font-weight="normal"  stroke="#c8c8d4" stroke-width="0.35" stroke-linejoin="round">17:15</text><rect x="1551.2" y="1434" width="2" height="348" fill="#424449"/><text x="1552.2" y="1820" font-size="24.2" fill="#c8c8d4" text-anchor="middle" font-weight="normal"  stroke="#c8c8d4" stroke-width="0.35" stroke-linejoin="round">17:20</text><rect x="1788.4" y="1434" width="2" height="348" fill="#424449"/><text x="1789.4" y="1820" font-size="24.2" fill="#c8c8d4" text-anchor="middle" font-weight="normal"  stroke="#c8c8d4" stroke-width="0.35" stroke-linejoin="round">17:25</text><rect x="2025.6" y="1434" width="2" height="348" fill="#424449"/><text x="2026.6" y="1820" font-size="24.2" fill="#c8c8d4" text-anchor="middle" font-weight="normal"  stroke="#c8c8d4" stroke-width="0.35" stroke-linejoin="round">17:30</text><rect x="2262.8" y="1434" width="2" height="348" fill="#424449"/><text x="2263.8" y="1820" font-size="24.2" fill="#c8c8d4" text-anchor="middle" font-weight="normal"  stroke="#c8c8d4" stroke-width="0.35" stroke-linejoin="round">17:35</text><rect x="2500" y="1434" width="2" height="348" fill="#424449"/><text x="2501" y="1820" font-size="24.2" fill="#c8c8d4" text-anchor="middle" font-weight="normal"  stroke="#c8c8d4" stroke-width="0.35" stroke-linejoin="round">17:40</text><rect x="2737.2" y="1434" width="2" height="348" fill="#424449"/><text x="2738.2" y="1820" font-size="24.2" fill="#c8c8d4" text-anchor="middle" font-weight="normal"  stroke="#c8c8d4" stroke-width="0.35" stroke-linejoin="round">17:45</text><g clip-path="url(#c_cl)"><rect x="34.3" y="1548.5" width="126.5" height="118.2" fill="#e24d42" stroke="rgba(0,0,0,0.12)" stroke-width="1"/><rect x="34.3" y="1666.6" width="126.5" height="71.6" fill="#ef843c" stroke="rgba(0,0,0,0.12)" stroke-width="1"/><rect x="34.3" y="1738.2" width="126.5" height="36.8" fill="#eab839" stroke="rgba(0,0,0,0.12)" stroke-width="1"/><rect x="34.3" y="1775" width="126.5" height="7" fill="#f2c96d" stroke="rgba(0,0,0,0.12)" stroke-width="1"/><rect x="224" y="1634" width="126.5" height="64.6" fill="#e24d42" stroke="rgba(0,0,0,0.12)" stroke-width="1"/><rect x="224" y="1698.6" width="126.5" height="51.4" fill="#ef843c" stroke="rgba(0,0,0,0.12)" stroke-width="1"/><rect x="224" y="1750" width="126.5" height="29.2" fill="#eab839" stroke="rgba(0,0,0,0.12)" stroke-width="1"/><rect x="224" y="1779.2" width="126.5" height="2.8" fill="#f2c96d" stroke="rgba(0,0,0,0.12)" stroke-width="1"/><rect x="413.8" y="1563.8" width="126.5" height="102.2" fill="#e24d42" stroke="rgba(0,0,0,0.12)" stroke-width="1"/><rect x="413.8" y="1665.9" width="126.5" height="70.2" fill="#ef843c" stroke="rgba(0,0,0,0.12)" stroke-width="1"/><rect x="413.8" y="1736.1" width="126.5" height="38.2" fill="#eab839" stroke="rgba(0,0,0,0.12)" stroke-width="1"/><rect x="413.8" y="1774.4" width="126.5" height="7.6" fill="#f2c96d" stroke="rgba(0,0,0,0.12)" stroke-width="1"/><rect x="603.4" y="1566.5" width="126.5" height="101.5" fill="#e24d42" stroke="rgba(0,0,0,0.12)" stroke-width="1"/><rect x="603.4" y="1668" width="126.5" height="69.5" fill="#ef843c" stroke="rgba(0,0,0,0.12)" stroke-width="1"/><rect x="603.4" y="1737.5" width="126.5" height="36.8" fill="#eab839" stroke="rgba(0,0,0,0.12)" stroke-width="1"/><rect x="603.4" y="1774.4" width="126.5" height="7.6" fill="#f2c96d" stroke="rgba(0,0,0,0.12)" stroke-width="1"/><rect x="793.1" y="1585.3" width="126.5" height="91" fill="#e24d42" stroke="rgba(0,0,0,0.12)" stroke-width="1"/><rect x="793.1" y="1676.4" width="126.5" height="65.3" fill="#ef843c" stroke="rgba(0,0,0,0.12)" stroke-width="1"/><rect x="793.1" y="1741.7" width="126.5" height="33.4" fill="#eab839" stroke="rgba(0,0,0,0.12)" stroke-width="1"/><rect x="793.1" y="1775" width="126.5" height="7" fill="#f2c96d" stroke="rgba(0,0,0,0.12)" stroke-width="1"/><rect x="982.8" y="1591.6" width="126.5" height="80.6" fill="#e24d42" stroke="rgba(0,0,0,0.12)" stroke-width="1"/><rect x="982.8" y="1672.2" width="126.5" height="66" fill="#ef843c" stroke="rgba(0,0,0,0.12)" stroke-width="1"/><rect x="982.8" y="1738.2" width="126.5" height="35.4" fill="#eab839" stroke="rgba(0,0,0,0.12)" stroke-width="1"/><rect x="982.8" y="1773.7" width="126.5" height="8.3" fill="#f2c96d" stroke="rgba(0,0,0,0.12)" stroke-width="1"/><rect x="1172.5" y="1591.6" width="126.5" height="92.4" fill="#e24d42" stroke="rgba(0,0,0,0.12)" stroke-width="1"/><rect x="1172.5" y="1684" width="126.5" height="56.3" fill="#ef843c" stroke="rgba(0,0,0,0.12)" stroke-width="1"/><rect x="1172.5" y="1740.3" width="126.5" height="32" fill="#eab839" stroke="rgba(0,0,0,0.12)" stroke-width="1"/><rect x="1172.5" y="1772.3" width="126.5" height="9.7" fill="#f2c96d" stroke="rgba(0,0,0,0.12)" stroke-width="1"/><rect x="1362.2" y="1564.5" width="126.5" height="95.2" fill="#e24d42" stroke="rgba(0,0,0,0.12)" stroke-width="1"/><rect x="1362.2" y="1659.7" width="126.5" height="73.7" fill="#ef843c" stroke="rgba(0,0,0,0.12)" stroke-width="1"/><rect x="1362.2" y="1733.3" width="126.5" height="36.8" fill="#eab839" stroke="rgba(0,0,0,0.12)" stroke-width="1"/><rect x="1362.2" y="1770.2" width="126.5" height="11.8" fill="#f2c96d" stroke="rgba(0,0,0,0.12)" stroke-width="1"/><rect x="1551.9" y="1506.1" width="126.5" height="129.3" fill="#e24d42" stroke="rgba(0,0,0,0.12)" stroke-width="1"/><rect x="1551.9" y="1635.4" width="126.5" height="92.4" fill="#ef843c" stroke="rgba(0,0,0,0.12)" stroke-width="1"/><rect x="1551.9" y="1727.8" width="126.5" height="40.3" fill="#eab839" stroke="rgba(0,0,0,0.12)" stroke-width="1"/><rect x="1551.9" y="1768.1" width="126.5" height="13.9" fill="#f2c96d" stroke="rgba(0,0,0,0.12)" stroke-width="1"/><rect x="1741.6" y="1580.5" width="126.5" height="88.3" fill="#e24d42" stroke="rgba(0,0,0,0.12)" stroke-width="1"/><rect x="1741.6" y="1668.7" width="126.5" height="63.9" fill="#ef843c" stroke="rgba(0,0,0,0.12)" stroke-width="1"/><rect x="1741.6" y="1732.7" width="126.5" height="36.8" fill="#eab839" stroke="rgba(0,0,0,0.12)" stroke-width="1"/><rect x="1741.6" y="1769.5" width="126.5" height="12.5" fill="#f2c96d" stroke="rgba(0,0,0,0.12)" stroke-width="1"/><rect x="1931.3" y="1506.8" width="126.5" height="122.3" fill="#e24d42" stroke="rgba(0,0,0,0.12)" stroke-width="1"/><rect x="1931.3" y="1629.1" width="126.5" height="90.4" fill="#ef843c" stroke="rgba(0,0,0,0.12)" stroke-width="1"/><rect x="1931.3" y="1719.5" width="126.5" height="43.8" fill="#eab839" stroke="rgba(0,0,0,0.12)" stroke-width="1"/><rect x="1931.3" y="1763.2" width="126.5" height="18.8" fill="#f2c96d" stroke="rgba(0,0,0,0.12)" stroke-width="1"/><rect x="2121" y="1561.7" width="126.5" height="102.2" fill="#e24d42" stroke="rgba(0,0,0,0.12)" stroke-width="1"/><rect x="2121" y="1663.8" width="126.5" height="76.5" fill="#ef843c" stroke="rgba(0,0,0,0.12)" stroke-width="1"/><rect x="2121" y="1740.3" width="126.5" height="32" fill="#eab839" stroke="rgba(0,0,0,0.12)" stroke-width="1"/><rect x="2121" y="1772.3" width="126.5" height="9.7" fill="#f2c96d" stroke="rgba(0,0,0,0.12)" stroke-width="1"/><rect x="2310.7" y="1516.5" width="126.5" height="131.4" fill="#e24d42" stroke="rgba(0,0,0,0.12)" stroke-width="1"/><rect x="2310.7" y="1647.9" width="126.5" height="83.4" fill="#ef843c" stroke="rgba(0,0,0,0.12)" stroke-width="1"/><rect x="2310.7" y="1731.3" width="126.5" height="36.8" fill="#eab839" stroke="rgba(0,0,0,0.12)" stroke-width="1"/><rect x="2310.7" y="1768.1" width="126.5" height="13.9" fill="#f2c96d" stroke="rgba(0,0,0,0.12)" stroke-width="1"/><rect x="2500.4" y="1553.3" width="126.5" height="94.5" fill="#e24d42" stroke="rgba(0,0,0,0.12)" stroke-width="1"/><rect x="2500.4" y="1647.9" width="126.5" height="75.8" fill="#ef843c" stroke="rgba(0,0,0,0.12)" stroke-width="1"/><rect x="2500.4" y="1723.6" width="126.5" height="43.1" fill="#eab839" stroke="rgba(0,0,0,0.12)" stroke-width="1"/><rect x="2500.4" y="1766.7" width="126.5" height="15.3" fill="#f2c96d" stroke="rgba(0,0,0,0.12)" stroke-width="1"/><rect x="2690.1" y="1512.3" width="126.5" height="120.2" fill="#e24d42" stroke="rgba(0,0,0,0.12)" stroke-width="1"/><rect x="2690.1" y="1632.6" width="126.5" height="82" fill="#ef843c" stroke="rgba(0,0,0,0.12)" stroke-width="1"/><rect x="2690.1" y="1714.6" width="126.5" height="51.4" fill="#eab839" stroke="rgba(0,0,0,0.12)" stroke-width="1"/><rect x="2690.1" y="1766" width="126.5" height="16" fill="#f2c96d" stroke="rgba(0,0,0,0.12)" stroke-width="1"/><rect x="2879.8" y="1586.7" width="126.5" height="93.8" fill="#e24d42" stroke="rgba(0,0,0,0.12)" stroke-width="1"/><rect x="2879.8" y="1680.5" width="126.5" height="69.5" fill="#ef843c" stroke="rgba(0,0,0,0.12)" stroke-width="1"/><rect x="2879.8" y="1750" width="126.5" height="29.2" fill="#eab839" stroke="rgba(0,0,0,0.12)" stroke-width="1"/><rect x="2879.8" y="1779.2" width="126.5" height="2.8" fill="#f2c96d" stroke="rgba(0,0,0,0.12)" stroke-width="1"/></g><text x="3279" y="1454" font-size="24.8" fill="#3d9be0" text-anchor="end" font-weight="bold" >avg</text><rect x="3013" y="1488.4" width="28" height="8" rx="4" fill="#fceaca"/><text x="3061.7" y="1501.4" font-size="25.3" fill="#ccccdc" text-anchor="start" font-weight="normal"  stroke="#ccccdc" stroke-width="0.35" stroke-linejoin="round">upper_25</text><text x="3295" y="1501.4" font-size="24.8" fill="#ccccdc" text-anchor="end" font-weight="normal"  stroke="#ccccdc" stroke-width="0.35" stroke-linejoin="round">6.81 ms</text><rect x="3009" y="1519.2" width="291" height="54" fill="#202226"/><rect x="3013" y="1542.2" width="28" height="8" rx="4" fill="#f2c96d"/><text x="3061.7" y="1555.2" font-size="25.3" fill="#ccccdc" text-anchor="start" font-weight="normal"  stroke="#ccccdc" stroke-width="0.35" stroke-linejoin="round">upper_50</text><text x="3295" y="1555.2" font-size="24.8" fill="#ccccdc" text-anchor="end" font-weight="normal"  stroke="#ccccdc" stroke-width="0.35" stroke-linejoin="round">142 ms</text><rect x="3013" y="1596" width="28" height="8" rx="4" fill="#eab839"/><text x="3061.7" y="1609" font-size="25.3" fill="#ccccdc" text-anchor="start" font-weight="normal"  stroke="#ccccdc" stroke-width="0.35" stroke-linejoin="round">upper_75</text><text x="3295" y="1609" font-size="24.8" fill="#ccccdc" text-anchor="end" font-weight="normal"  stroke="#ccccdc" stroke-width="0.35" stroke-linejoin="round">535 ms</text><rect x="3009" y="1626.8" width="291" height="54" fill="#202226"/><rect x="3013" y="1649.8" width="28" height="8" rx="4" fill="#ef843c"/><text x="3061.7" y="1662.8" font-size="25.3" fill="#ccccdc" text-anchor="start" font-weight="normal"  stroke="#ccccdc" stroke-width="0.35" stroke-linejoin="round">upper_90</text><text x="3295" y="1662.8" font-size="24.8" fill="#ccccdc" text-anchor="end" font-weight="normal"  stroke="#ccccdc" stroke-width="0.35" stroke-linejoin="round">1.04 s</text><rect x="3013" y="1703.6" width="28" height="8" rx="4" fill="#e24d42"/><text x="3061.7" y="1716.6" font-size="25.3" fill="#ccccdc" text-anchor="start" font-weight="normal"  stroke="#ccccdc" stroke-width="0.35" stroke-linejoin="round">upper_95</text><text x="3295" y="1716.6" font-size="24.8" fill="#ccccdc" text-anchor="end" font-weight="normal"  stroke="#ccccdc" stroke-width="0.35" stroke-linejoin="round">1.46 s</text></svg>
</body></html>
